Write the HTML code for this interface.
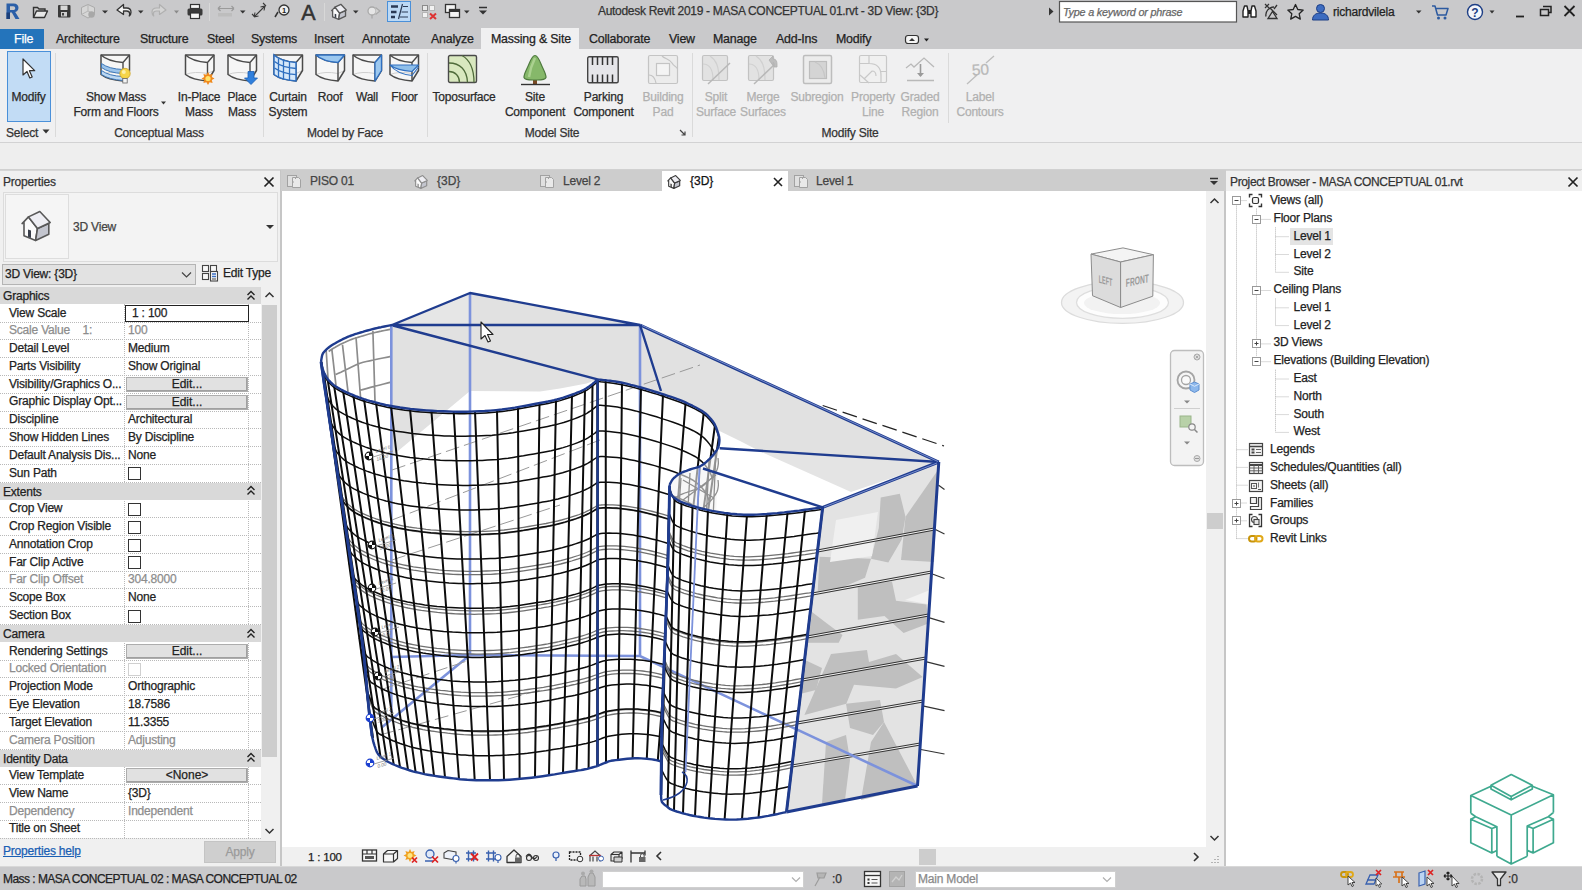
<!DOCTYPE html>
<html lang="en">
<head>
<meta charset="utf-8">
<title>Autodesk Revit 2019 - MASA CONCEPTUAL 01.rvt - 3D View: {3D}</title>
<style>
*{box-sizing:border-box;margin:0;padding:0}
html,body{width:1582px;height:890px;overflow:hidden;background:#c9c9cb}
body{font-family:"Liberation Sans",sans-serif;font-size:12px;color:#222;position:relative;-webkit-text-stroke:.25px currentColor}
div,span,svg{position:absolute}
.t{white-space:nowrap;line-height:14px;height:14px;font-size:12px;letter-spacing:-.2px}
.c{transform:translateX(-50%);text-align:center}
.dis{color:#a9a9a9}
.g{color:#8c8c8c}
#titlebar{left:0;top:0;width:1582px;height:28px;background:#c9c9cb}
#tabrow{left:0;top:28px;width:1582px;height:21px;background:#c9c9cb}
#ribbon{left:0;top:49px;width:1582px;height:94px;background:#f0f0f1;border-bottom:1px solid #d2d2d3}
#optbar{left:0;top:143px;width:1582px;height:27px;background:#eeeeee;border-bottom:1px solid #d0d0d0}
#props{left:0;top:170px;width:280px;height:696px;background:#f0f0f0}
#mid{left:280px;top:170px;width:946px;height:696px;background:#c6c6c6}
#viewtabs{left:281px;top:170px;width:945px;height:21px;background:#cdcdcd}
#canvas{left:282px;top:191px;width:924px;height:656px;background:#fff;overflow:hidden}
#vscroll{left:1206px;top:191px;width:18px;height:656px;background:#f0f0f0}
#viewctl{left:282px;top:847px;width:942px;height:19px;background:#f0f0f0}
#browser{left:1226px;top:170px;width:356px;height:696px;background:#fff}
#status{left:0;top:866px;width:1582px;height:24px;background:#c9c9cb}
.sep{width:1px;background:#dcdcdc;top:4px;height:84px}
.ptitle{top:77px;color:#333}
.rl{letter-spacing:-.2px;font-size:12px;line-height:15px;height:auto;white-space:nowrap;text-align:center;transform:translateX(-50%);top:41px;color:#2a2a2a}
.rl.dis{color:#b0b0b0}
.prow{left:0;width:261px;height:18px}
.pn{left:9px;top:2px}
.pv{left:128px;top:2px}
.phead{left:0;width:261px;background:#d9d9d9}
.cb{left:128px;width:13px;height:13px;border:1px solid #333;background:#fff}
.ebtn{left:126px;width:122px;height:15px;background:#e1e1e1;border:1px solid #adadad;box-shadow:inset -1px -1px 0 #a0a0a0;text-align:center;line-height:13px;font-size:12px}
.tr{white-space:nowrap;line-height:14px;height:14px;font-size:12px;color:#222;letter-spacing:-.2px}
</style>
</head>
<body>
<!-- ===== TITLE BAR ===== -->
<div id="titlebar">
<svg style="left:0;top:0" width="500" height="28" viewBox="0 0 500 28">
 <!-- Revit R logo -->
 <path d="M6.5 3.5h7.2c3 0 4.8 1.7 4.8 4.3 0 2.2-1.3 3.7-3.3 4.2l4.3 7h-4l-3.7-6.5h-1.8V19H6.5z M10 6.3v3.8h3.2c1.3 0 2-.8 2-1.9s-.7-1.9-2-1.9z" fill="#2b5fa8"/>
 <path d="M6.5 12.5l3.5 0V19H6.5z" fill="#1b3f7a"/>
 <!-- open folder -->
 <path d="M33.5 17.5v-10h4l1.5 1.5h6v2" fill="none" stroke="#333" stroke-width="1.4"/>
 <path d="M33.5 17.5l3-6.5h11l-3 6.5z" fill="#e8e8e8" stroke="#333" stroke-width="1.4" stroke-linejoin="round"/>
 <!-- save -->
 <rect x="58" y="5" width="12.500" height="12.500" rx="1" fill="#3a3a3a"/>
 <rect x="60.500" y="5.500" width="7" height="4.500" fill="#d8d8d8"/><rect x="61" y="12" width="6" height="4.500" fill="#cfcfcf"/><rect x="62" y="13" width="2" height="2.500" fill="#444"/>
 <!-- sync (disabled) -->
 <path d="M88 4.500l6.500 3v7l-6.500 3.500l-6.500-3.500v-7z" fill="#d6d6d6" stroke="#aaa" stroke-width="1"/>
 <path d="M88 4.500v6.500l6.500 3.500M88 11l-6.500 3.500" fill="none" stroke="#b5b5b5" stroke-width="1"/>
 <circle cx="91.500" cy="14.500" r="3.200" fill="#a8a8a8"/>
 <path d="M102 10.500h6l-3 3z" fill="#333"/>
 <!-- undo -->
 <path d="M117 10l6.500-5.500v3.500h3c3 0 4.500 2 4.500 4.200 0 1.600-.6 3-1.800 3.800.4-.8.5-1.500.5-2.200 0-1.700-1.200-2.800-3.200-2.800h-3v3.500z" fill="#f4f4f4" stroke="#333" stroke-width="1.300" stroke-linejoin="round"/>
 <path d="M138 10.500h5.500l-2.750 3z" fill="#333"/>
 <!-- redo (disabled) -->
 <path d="M166 10l-6.500-5.500v3.500h-3c-3 0-4.500 2-4.500 4.200 0 1.600.6 3 1.800 3.800-.4-.8-.5-1.500-.5-2.200 0-1.700 1.200-2.800 3.200-2.800h3v3.500z" fill="#d4d4d4" stroke="#b0b0b0" stroke-width="1.200" stroke-linejoin="round"/>
 <path d="M174 10.500h5l-2.500 3z" fill="#8a8a8a"/>
 <!-- print -->
 <rect x="190.500" y="4.500" width="9" height="4" fill="#f6f6f6" stroke="#333" stroke-width="1.200"/>
 <rect x="187.500" y="8.500" width="15" height="7" rx="1.500" fill="#3a3a3a"/>
 <rect x="190.500" y="13" width="9" height="5.500" fill="#f6f6f6" stroke="#333" stroke-width="1.200"/>
 <line x1="209.500" y1="3" x2="209.500" y2="21" stroke="#d8d8d8"/>
 <!-- measure (disabled look) -->
 <path d="M218 8.500h16M218 8.500l2.500-2.500M218 8.500l2.500 2.500M234 8.500l-2.500-2.500M234 8.500l-2.500 2.500" stroke="#9a9a9a" stroke-width="1.200" fill="none"/>
 <rect x="218" y="13" width="14" height="3.500" fill="#bdbdbd"/>
 <path d="M240 10.500h5.500l-2.750 3z" fill="#333"/>
 <!-- aligned dim -->
 <path d="M254 17l11-11M254 17l1-4.500M254 17l4.500-1M265 6l-4.500 1M265 6l-1 4.500M252 14l3 3M263 3l3 3" stroke="#3a3a3a" stroke-width="1.100" fill="none"/>
 <!-- tag -->
 <path d="M275 17l3-5" stroke="#333" stroke-width="1.500"/><circle cx="284" cy="10" r="5" fill="#efefef" stroke="#333" stroke-width="1.300"/>
 <text x="284" y="13" font-size="7.500" text-anchor="middle" fill="#222" font-family="Liberation Sans, sans-serif" font-weight="bold">1</text>
 <!-- text A -->
 <text x="308.500" y="19.500" font-size="21.500" text-anchor="middle" fill="#333" font-family="Liberation Sans, sans-serif" stroke="#333" stroke-width=".500">A</text>
 <!-- 3D view house -->
 <g transform="translate(329.500,2.500) scale(.52)"><path d="M4.100 15.600L10.500 8.900L19.500 20.400L17.600 32.400L6 27.700V14Z" fill="#fbfbfb" stroke="#585858" stroke-width="2.600" stroke-linejoin="round"/>
<path d="M19.500 20.400L30.800 15.600V26.300L17.600 32.400Z" fill="#c3c5ce" stroke="#585858" stroke-width="2.600" stroke-linejoin="round"/>
<path d="M10.500 8.900L21.800 3.500L32.200 14.500L19.500 20.400Z" fill="#eeeef3" stroke="#585858" stroke-width="2.600" stroke-linejoin="round"/>
<path d="M10 21.500l3 1V30l-3-1.200z" fill="#3a3f4a"/></g>
 <line x1="324.500" y1="3" x2="324.500" y2="21" stroke="#d8d8d8"/>
 <path d="M353 10.500h5.500l-2.750 3z" fill="#333"/>
 <!-- section (disabled) -->
 <circle cx="372" cy="11" r="4" fill="#e6e6e6" stroke="#a9a9a9" stroke-width="1.300"/><path d="M375.500 7.500l4.500 3.500-4.500 3.500" fill="#d0d0d0" stroke="#a9a9a9" stroke-width="1.200"/><path d="M372 15v3.500" stroke="#a9a9a9" stroke-width="1.300"/>
 <!-- thin lines (active) -->
 <rect x="387.500" y="1.500" width="23" height="20" fill="#bcd9f5" stroke="#4a90d9" stroke-width="1"/>
 <path d="M391 6.500h7M391 12h5.500M391 17h4" stroke="#2a3a55" stroke-width="2.400"/>
 <path d="M402.500 4l-4 15" stroke="#2a3a55" stroke-width="1.200"/><path d="M403 6.500h5M401.500 12h6.500M400 17h8" stroke="#2a3a55" stroke-width="1"/>
 <!-- close hidden -->
 <rect x="422.500" y="5.500" width="5" height="5" fill="#e8e8e8" stroke="#8a8a8a" stroke-width="1"/><rect x="429.500" y="5.500" width="5" height="5" fill="#f2f2f2" stroke="#b5b5b5" stroke-width="1"/><rect x="422.500" y="12.500" width="5" height="5" fill="#f2f2f2" stroke="#b5b5b5" stroke-width="1"/>
 <path d="M430 13.500l6 5.500M436 13.500l-6 5.500" stroke="#d33" stroke-width="2"/>
 <!-- switch windows -->
 <rect x="445.500" y="4.500" width="10" height="8" fill="#f4f4f4" stroke="#333" stroke-width="1.300"/><rect x="449.500" y="9.500" width="10" height="8" fill="#f4f4f4" stroke="#333" stroke-width="1.300"/><rect x="449.500" y="9.500" width="10" height="2.500" fill="#333"/>
 <path d="M464 10.500h5.500l-2.750 3z" fill="#333"/>
 <!-- customize -->
 <path d="M479 7.500h8" stroke="#333" stroke-width="1.500"/><path d="M479 10.500h8l-4 4z" fill="#333"/>
</svg>
<span class="t" style="left:598px;top:4px;font-size:12px;letter-spacing:-.3px;color:#333">Autodesk Revit 2019 - MASA CONCEPTUAL 01.rvt - 3D View: {3D}</span>
<svg style="left:1045px;top:0" width="537" height="28" viewBox="1045 0 537 28">
 <path d="M1049 7.500l4.500 4-4.500 4z" fill="#333"/>
 <rect x="1059.500" y="1.500" width="177" height="20.500" fill="#fff" stroke="#555" stroke-width="1.200"/>
 <!-- binoculars -->
 <path d="M1243 17v-6l1.500-5h2.500l1 5v6zM1251 17v-6l1-5h2.500l1.500 5v6z" fill="#fff" stroke="#222" stroke-width="1.400" stroke-linejoin="round"/><path d="M1248 10h3v4h-3z" fill="#222"/>
 <!-- satellite / comm center -->
 <path d="M1266 16.500c-1-5 3-9.500 8-9.500M1268 18.500h9l-4.500-7z" fill="none" stroke="#333" stroke-width="1.300"/><path d="M1270 8l7 7M1277 5l-3 4" stroke="#333" stroke-width="1.300"/><path d="M1265 4l4 4M1269 4l-4 4" stroke="#333" stroke-width="1.200"/>
 <!-- star -->
 <path d="M1295.500 4.500l2.300 5 5.400.6-4 3.700 1.100 5.300-4.800-2.700-4.800 2.700 1.100-5.300-4-3.700 5.400-.6z" fill="none" stroke="#222" stroke-width="1.300" stroke-linejoin="round"/>
 <!-- user -->
 <circle cx="1320.500" cy="8.500" r="4" fill="#3d6cc0" stroke="#1d3e85" stroke-width="1"/><path d="M1312.500 20c0-4.500 3-7 8-7s8 2.500 8 7z" fill="#3d6cc0" stroke="#1d3e85" stroke-width="1"/>
 <path d="M1416 10.500h5.500l-2.750 3z" fill="#333"/>
 <!-- cart -->
 <path d="M1432 6h3l2.500 9h8.500l2-6.500h-12" fill="none" stroke="#2c5aa0" stroke-width="1.500" stroke-linejoin="round"/><circle cx="1438.500" cy="18" r="1.500" fill="#2c5aa0"/><circle cx="1445" cy="18" r="1.500" fill="#2c5aa0"/>
 <!-- help -->
 <circle cx="1475" cy="12" r="7.500" fill="#f4f6fa" stroke="#1d3e85" stroke-width="1.400"/>
 <text x="1475" y="16.500" font-size="12" font-weight="bold" text-anchor="middle" fill="#1d3e85" font-family="Liberation Sans, sans-serif">?</text>
 <path d="M1489.500 10.500h5l-2.500 3z" fill="#333"/>
 <!-- window controls -->
 <path d="M1516 16.500h8" stroke="#222" stroke-width="1.800"/>
 <path d="M1543 6.500h8v6h-2.500" fill="none" stroke="#222" stroke-width="1.500"/><rect x="1540.500" y="9.500" width="8" height="6" fill="#c9c9cb" stroke="#222" stroke-width="1.500"/>
 <path d="M1564.500 6l10 10M1574.500 6l-10 10" stroke="#222" stroke-width="1.800"/>
</svg>
<span class="t" style="left:1063px;top:5px;font-style:italic;color:#666;font-size:10.800px">Type a keyword or phrase</span>
<span class="t" style="left:1333px;top:5px;color:#222">richardvilela</span>
</div>
<!-- ===== RIBBON TABS ===== -->
<div id="tabrow">
 <div style="left:0;top:1px;width:44px;height:20px;background:#2474bb"></div>
 <div style="left:481px;top:0;width:98px;height:22px;background:#f0f0f1"></div>
 <span class="t" style="left:14px;top:4px;color:#fff;font-size:12.500px">File</span>
 <span class="t" style="left:56px;top:4px;font-size:12.400px">Architecture</span>
 <span class="t" style="left:140px;top:4px;font-size:12.400px">Structure</span>
 <span class="t" style="left:207px;top:4px;font-size:12.400px">Steel</span>
 <span class="t" style="left:251px;top:4px;font-size:12.400px">Systems</span>
 <span class="t" style="left:314px;top:4px;font-size:12.400px">Insert</span>
 <span class="t" style="left:362px;top:4px;font-size:12.400px">Annotate</span>
 <span class="t" style="left:431px;top:4px;font-size:12.400px">Analyze</span>
 <span class="t" style="left:491px;top:4px;font-size:12.400px">Massing &amp; Site</span>
 <span class="t" style="left:589px;top:4px;font-size:12.400px">Collaborate</span>
 <span class="t" style="left:669px;top:4px;font-size:12.400px">View</span>
 <span class="t" style="left:713px;top:4px;font-size:12.400px">Manage</span>
 <span class="t" style="left:776px;top:4px;font-size:12.400px">Add-Ins</span>
 <span class="t" style="left:836px;top:4px;font-size:12.400px">Modify</span>
 <svg style="left:900px;top:0" width="40" height="21" viewBox="0 0 40 21"><rect x="5.500" y="7.500" width="13" height="8" rx="2.500" fill="#f4f4f4" stroke="#333" stroke-width="1.200"/><path d="M9 13l3-3 3 3z" fill="#333"/><path d="M24 10.500h5l-2.500 3z" fill="#222"/></svg>
</div>
<!-- ===== RIBBON ===== -->
<div id="ribbon">
<svg style="left:0;top:0" width="1020" height="92" viewBox="0 0 1020 92">
 <defs>
  <g id="mass">
   <path d="M1 1H29.500V16.500L23 27Q8 26 1 20.500Z" fill="#f6f6f6" stroke="none"/>
   <path d="M1 20.500Q10 17 23 19.500L29.500 16.500M23 19.500V27" fill="none" stroke="#cfcfcf" stroke-width="1"/>
   <path d="M1 1H29.500V16.500L23 27Q8 26 1 20.500Z" fill="none" stroke="#4a4a4a" stroke-width="1.500" stroke-linejoin="round"/>
   <path d="M1 1Q8 7.500 23 8.500L29.500 1M23 8.500V27" fill="none" stroke="#4a4a4a" stroke-width="1.400"/>
  </g>
 </defs>
 <!-- Modify button -->
 <rect x="7.500" y="2.500" width="43" height="70" fill="#c2dcf5" stroke="#4a90d9" stroke-width="1"/>
 <path d="M23 10v16l4-3.500 2.800 6.500 2.400-1-2.800-6.300h5.300z" fill="#fff" stroke="#333" stroke-width="1.200" stroke-linejoin="round"/>
 <path d="M42.500 80.500h7l-3.500 4z" fill="#333"/>
 <!-- separators -->
 <path d="M55.500 4v84M263.500 4v84M427.500 4v84M692.500 4v84M948.500 4v70" stroke="#dadada" stroke-width="1"/>
 <!-- Show Mass -->
 <g transform="translate(100,5)">
  <use href="#mass"/>
  <path d="M1.500 9.500Q9 15 23 15.500V19.500Q9 19 1.500 13.500Z" fill="#9cc4ea" stroke="#3d77b8" stroke-width="1"/>
  <path d="M1.500 16.500Q9 22 23 22.500V26.500Q9 25.500 1.500 20.500Z" fill="#bcd8f2" stroke="#3d77b8" stroke-width="1"/>
  <circle cx="25" cy="19.500" r="5.200" fill="#f6d548" stroke="#c9a227" stroke-width=".8"/>
  <circle cx="23.800" cy="18" r="2" fill="#fdf0a8"/>
  <rect x="22.800" y="24.500" width="4.400" height="4.500" fill="#f4f4f4" stroke="#666" stroke-width=".8"/>
 </g>
 <path d="M161 52.500h5l-2.500 3z" fill="#333"/>
 <!-- In-Place Mass -->
 <g transform="translate(184.500,5)"><use href="#mass"/>
  <g transform="translate(23.500,24.500)"><path d="M0-6.500L1.600-3.800 4.600-4.600 3.800-1.600 6.500 0 3.800 1.600 4.600 4.600 1.600 3.800 0 6.500-1.600 3.800-4.600 4.600-3.800 1.600-6.500 0-3.800-1.600-4.600-4.600-1.600-3.800Z" fill="#f08a1d"/><circle r="2.600" fill="#ffe26a"/></g>
 </g>
 <!-- Place Mass -->
 <g transform="translate(227,5)"><use href="#mass"/>
  <path d="M21 17.500h6v6.500h3.500l-6.500 6.500-6.500-6.500h3.500z" fill="#2f7fdc" stroke="#1b5fb5" stroke-width=".8"/>
 </g>
 <!-- Curtain System -->
 <g transform="translate(273,5)"><use href="#mass"/>
  <path d="M1 1Q8 7.500 23 8.500V27Q8 26 1 20.500Z" fill="#d6e8fa" stroke="#2f6fc0" stroke-width="1.500"/>
  <path d="M1.500 7.500Q9 13.500 23 14.500M1.500 14Q9 19.500 23 20.700M5.500 4.500V23.500M10.500 6.500V25.300M16.500 8V26.500" fill="none" stroke="#2f6fc0" stroke-width="1.300"/>
 </g>
 <!-- Roof -->
 <g transform="translate(315,5)"><use href="#mass"/>
  <path d="M1 1H29.500L23 8.500Q8 7.500 1 1Z" fill="#9cc8ef" stroke="#2f6fc0" stroke-width="1.300" stroke-linejoin="round"/>
 </g>
 <!-- Wall -->
 <g transform="translate(352,5)"><use href="#mass"/>
  <path d="M23 8.500L29.500 1V16.500L23 27Z" fill="#9cc8ef" stroke="#2f6fc0" stroke-width="1.300" stroke-linejoin="round"/>
 </g>
 <!-- Floor -->
 <g transform="translate(389,5)"><use href="#mass"/>
  <path d="M1 11H29.500L23 17.500Q8 16.500 1 11Z" fill="#8fbfea" stroke="#2f6fc0" stroke-width="1.200" stroke-linejoin="round"/>
  <path d="M1 11Q8 20 23 21.500L29.500 13" fill="none" stroke="#2f6fc0" stroke-width="1.100"/>
 </g>
 <!-- Toposurface -->
 <g transform="translate(448,6)">
  <rect x=".500" y=".500" width="28" height="27" rx="1.500" fill="#d9e8bf" stroke="#4a4a4a" stroke-width="1.400"/>
  <path d="M14 .500C22 5 26 14 26 27.500M1 8C12 8 19 15 19.500 27.500M1 16.500C7 16.500 11.500 21 11.500 27.500" fill="none" stroke="#4f6b3a" stroke-width="1.300"/>
 </g>
 <!-- Site component tree -->
 <g transform="translate(520,5)">
  <rect x="13" y="24" width="4" height="6" fill="#7a4a24"/>
  <path d="M15 1.500C17.500 1.500 19 5 21 10C23 15 26.500 20.500 26 23.500C25 26.500 19 26 15 26C11 26 5 26.500 4 23.500C3.500 20.500 7 15 9 10C11 5 12.500 1.500 15 1.500Z" fill="#86b86a" stroke="#4f7a3f" stroke-width="1.200"/>
  <path d="M15 4C12 10 10 16 9 23" stroke="#b4d79a" stroke-width="2.500" fill="none" opacity=".8"/>
  <path d="M1 30.500h29" stroke="#333" stroke-width="1.400"/>
 </g>
 <!-- Parking -->
 <g transform="translate(587,7)">
  <rect x=".700" y=".700" width="30.500" height="26" rx="1.500" fill="#e6e6ea" stroke="#444" stroke-width="1.400"/>
  <path d="M5.500 1v8M10.500 1v8M15.500 1v8M20.500 1v8M25.500 1v8M5.500 18.500v8M10.500 18.500v8M15.500 18.500v8M20.500 18.500v8M25.500 18.500v8" stroke="#333" stroke-width="1.500"/>
 </g>
 <!-- Building Pad (disabled) -->
 <g transform="translate(648,6)" stroke="#c4c4c4" fill="none" stroke-width="1.200">
  <rect x=".500" y=".500" width="29" height="28" rx="1.500" fill="#ececec"/>
  <rect x="8.500" y="8.500" width="13" height="12" fill="#f4f4f4"/>
  <path d="M14 1c3 3 8 3 10 7s5 3 5.500 6M1 20c4 0 6 3 7 8"/>
 </g>
 <!-- Split Surface -->
 <g transform="translate(702,6)" stroke="#c2c2c2" fill="none" stroke-width="1.200">
  <rect x=".500" y=".500" width="25" height="25" rx="1.500" fill="#e2e2e2"/>
  <path d="M8 1c6 4 9 10 9 24M1 9c6 0 10 5 10 16" stroke="#d0d0d0"/>
  <path d="M6 29L28 8" stroke="#b8b8b8" stroke-width="1.500"/>
 </g>
 <!-- Merge Surfaces -->
 <g transform="translate(748,6)" stroke="#c2c2c2" fill="none" stroke-width="1.200">
  <rect x=".500" y=".500" width="25" height="25" rx="1.500" fill="#e2e2e2"/>
  <path d="M8 1c6 4 9 10 9 24M1 9c6 0 10 5 10 16" stroke="#d0d0d0"/>
  <path d="M6 29L26 10" stroke="#b8b8b8" stroke-width="1.500"/>
  <path d="M21 5l4-4v3c3 0 4 2 4 5v3h-3v-3c0-1-.5-1.500-1-1.500v3z" fill="#bdbdbd" stroke="#b0b0b0" stroke-width=".8"/>
 </g>
 <!-- Subregion -->
 <g transform="translate(803,6)" stroke="#bdbdbd" fill="none" stroke-width="1.200">
  <rect x=".500" y=".500" width="28" height="28" rx="1.500" fill="#ececec" stroke-width="1.500"/>
  <rect x="6.500" y="6.500" width="17" height="17" fill="#d4d4d4"/>
  <path d="M12 7c5 2 9 7 10 16" stroke="#c6c6c6"/>
 </g>
 <!-- Property Line -->
 <g transform="translate(859,6)" stroke="#c8c8c8" fill="none" stroke-width="1.200">
  <rect x=".500" y=".500" width="27" height="27" rx="1.500" fill="#f0f0f0"/>
  <path d="M10 .500v8c8 0 12 4 12 12v7.500M1 8.500h9M22 16.500h6M1 20l9 8M5 24l8-8c3 0 4 2 4 5"/>
 </g>
 <!-- Graded Region -->
 <g transform="translate(905,6)" stroke="#b9b9b9" fill="none" stroke-width="1.300">
  <path d="M1 13l5-4 3 3 10-9 10 9M2 25.500h27"/>
  <path d="M15.500 9v12" stroke="#9a9a9a" stroke-width="1.600"/><path d="M12 18l3.500 4 3.500-4z" fill="#9a9a9a" stroke="none"/>
 </g>
 <!-- Label contours -->
 <g transform="translate(966,6)">
  <path d="M1 29l10-9M20 8l8-7" stroke="#bdbdbd" stroke-width="1.300"/>
 </g>
</svg>
<span class="t" style="left:972px;top:12px;font-size:15.500px;line-height:18px;height:18px;color:#b9b9b9;transform:rotate(-4deg)">50</span>
<!-- labels -->
<span class="rl" style="left:28.500px;top:41px">Modify</span>
<span class="t" style="left:6px;top:77px;color:#333">Select</span>
<span class="rl" style="left:116px">Show Mass<br>Form and Floors</span>
<span class="rl" style="left:199px">In-Place<br>Mass</span>
<span class="rl" style="left:242px">Place<br>Mass</span>
<span class="rl" style="left:288px">Curtain<br>System</span>
<span class="rl" style="left:330px">Roof</span>
<span class="rl" style="left:367px">Wall</span>
<span class="rl" style="left:404.500px">Floor</span>
<span class="rl" style="left:464px">Toposurface</span>
<span class="rl" style="left:535px">Site<br>Component</span>
<span class="rl" style="left:603.500px">Parking<br>Component</span>
<span class="rl dis" style="left:663px">Building<br>Pad</span>
<span class="rl dis" style="left:716px">Split<br>Surface</span>
<span class="rl dis" style="left:763px">Merge<br>Surfaces</span>
<span class="rl dis" style="left:817px">Subregion</span>
<span class="rl dis" style="left:873px">Property<br>Line</span>
<span class="rl dis" style="left:920px">Graded<br>Region</span>
<span class="rl dis" style="left:980px">Label<br>Contours</span>
<span class="t c ptitle" style="left:159px">Conceptual Mass</span>
<span class="t c ptitle" style="left:345px">Model by Face</span>
<span class="t c ptitle" style="left:552px">Model Site</span>
<span class="t c ptitle" style="left:850px">Modify Site</span>
<svg style="left:678px;top:79px" width="10" height="10" viewBox="0 0 10 10"><path d="M2 2l5 5M7 3.500V7H3.500" fill="none" stroke="#444" stroke-width="1.200"/></svg>
</div>
<div id="optbar"></div>
<!-- ===== PROPERTIES ===== -->
<div id="props">
<div style="left:0;top:0;width:280px;height:1px;background:#d6d6d6"></div>
<span class="t" style="left:3px;top:5px;color:#333">Properties</span>
<svg style="left:263px;top:6px" width="12" height="12" viewBox="0 0 12 12"><path d="M1.500 1.500l9 9M10.500 1.500l-9 9" stroke="#222" stroke-width="1.700"/></svg>
<div style="left:3px;top:22px;width:275px;height:70px;background:#f3f3f3;border:1px solid #dcdcdc"></div>
<div style="left:5px;top:24px;width:64px;height:65px;background:#f5f5f5;border:1px solid #dddddd"></div>
<svg style="left:18px;top:38px" width="36" height="36" viewBox="0 0 36 36">
<path d="M4.100 15.600L10.500 8.900L19.500 20.400L17.600 32.400L6 27.700V14Z" fill="#fbfbfb" stroke="#585858" stroke-width="1.600" stroke-linejoin="round"/>
<path d="M19.500 20.400L30.800 15.600V26.300L17.600 32.400Z" fill="#c3c5ce" stroke="#585858" stroke-width="1.600" stroke-linejoin="round"/>
<path d="M10.500 8.900L21.800 3.500L32.200 14.500L19.500 20.400Z" fill="#eeeef3" stroke="#585858" stroke-width="1.600" stroke-linejoin="round"/>
<path d="M10 21.500l3 1V30l-3-1.200z" fill="#3a3f4a"/>
</svg>
<span class="t" style="left:73px;top:50px;color:#444">3D View</span>
<svg style="left:265px;top:54px" width="10" height="6" viewBox="0 0 10 6"><path d="M1 1h8L5 5z" fill="#333"/></svg>
<div style="left:2px;top:94px;width:194px;height:21px;background:#e2e2e2;border:1px solid #b4b4b4"></div>
<span class="t" style="left:5px;top:97px">3D View: {3D}</span>
<svg style="left:181px;top:101px" width="11" height="8" viewBox="0 0 11 8"><path d="M1 1.500l4.500 4.500L10 1.500" fill="none" stroke="#444" stroke-width="1.200"/></svg>
<svg style="left:201px;top:94px" width="20" height="20" viewBox="0 0 20 20">
<rect x="1.500" y="1.500" width="6" height="6" fill="#f8f8f8" stroke="#444" stroke-width="1.100"/><rect x="9.500" y="1.500" width="6" height="6" fill="#f8f8f8" stroke="#444" stroke-width="1.100"/>
<rect x="1.500" y="9.500" width="6" height="6" fill="#f8f8f8" stroke="#444" stroke-width="1.100"/>
<rect x="9.500" y="7.500" width="7" height="9.500" fill="#f8f8f8" stroke="#444" stroke-width="1.100"/><path d="M11 10h4M11 12.500h4" stroke="#3b6fc4" stroke-width="1.300"/><path d="M11 15h4" stroke="#444" stroke-width="1"/></svg>
<span class="t" style="left:223px;top:96px">Edit Type</span>
<div style="left:0;top:134.3px;width:261px;height:533.7px;background:#fff"></div>
<div style="left:124px;top:134.3px;width:0;height:533.7px;border-left:1px dotted #b9b9b9"></div>
<div style="left:248px;top:134.3px;width:0;height:533.7px;border-left:1px dotted #b9b9b9"></div>
<div class="phead" style="top:117.0px;height:17.3px"></div>
<span class="t" style="left:3px;top:119.2px">Graphics</span>
<svg style="left:246px;top:119.7px" width="10" height="11" viewBox="0 0 10 11"><path d="M1.500 5l3.500-3.500L8.500 5M1.500 9.500l3.500-3.500 3.500 3.500" fill="none" stroke="#222" stroke-width="1.400"/></svg>
<div style="left:0;top:151.6px;width:261px;height:0;border-top:1px dotted #b9b9b9"></div>
<span class="t" style="left:9px;top:135.5px">View Scale</span>
<div style="left:125px;top:134.8px;width:124px;height:16.8px;border:1.500px solid #222;background:#fff"></div>
<span class="t" style="left:132px;top:135.5px">1 : 100</span>
<div style="left:0;top:169.4px;width:261px;height:0;border-top:1px dotted #b9b9b9"></div>
<span class="t" style="left:9px;top:153.3px;color:#8d8d8d">Scale Value&nbsp;&nbsp;&nbsp; 1:</span>
<span class="t" style="left:128px;top:153.3px;color:#8d8d8d">100</span>
<div style="left:0;top:187.2px;width:261px;height:0;border-top:1px dotted #b9b9b9"></div>
<span class="t" style="left:9px;top:171.1px">Detail Level</span>
<span class="t" style="left:128px;top:171.1px">Medium</span>
<div style="left:0;top:205.0px;width:261px;height:0;border-top:1px dotted #b9b9b9"></div>
<span class="t" style="left:9px;top:188.9px">Parts Visibility</span>
<span class="t" style="left:128px;top:188.9px">Show Original</span>
<div style="left:0;top:222.8px;width:261px;height:0;border-top:1px dotted #b9b9b9"></div>
<span class="t" style="left:9px;top:206.7px">Visibility/Graphics O...</span>
<div class="ebtn" style="top:207.0px">Edit...</div>
<div style="left:0;top:240.5px;width:261px;height:0;border-top:1px dotted #b9b9b9"></div>
<span class="t" style="left:9px;top:224.4px">Graphic Display Opt...</span>
<div class="ebtn" style="top:224.8px">Edit...</div>
<div style="left:0;top:258.3px;width:261px;height:0;border-top:1px dotted #b9b9b9"></div>
<span class="t" style="left:9px;top:242.2px">Discipline</span>
<span class="t" style="left:128px;top:242.2px">Architectural</span>
<div style="left:0;top:276.1px;width:261px;height:0;border-top:1px dotted #b9b9b9"></div>
<span class="t" style="left:9px;top:260.0px">Show Hidden Lines</span>
<span class="t" style="left:128px;top:260.0px">By Discipline</span>
<div style="left:0;top:293.9px;width:261px;height:0;border-top:1px dotted #b9b9b9"></div>
<span class="t" style="left:9px;top:277.8px">Default Analysis Dis...</span>
<span class="t" style="left:128px;top:277.8px">None</span>
<div style="left:0;top:311.7px;width:261px;height:0;border-top:1px dotted #b9b9b9"></div>
<span class="t" style="left:9px;top:295.6px">Sun Path</span>
<div class="cb" style="top:297.3px"></div>
<div class="phead" style="top:312.7px;height:17.3px"></div>
<span class="t" style="left:3px;top:314.9px">Extents</span>
<svg style="left:246px;top:315.4px" width="10" height="11" viewBox="0 0 10 11"><path d="M1.500 5l3.500-3.500L8.500 5M1.500 9.500l3.500-3.500 3.500 3.500" fill="none" stroke="#222" stroke-width="1.400"/></svg>
<div style="left:0;top:347.3px;width:261px;height:0;border-top:1px dotted #b9b9b9"></div>
<span class="t" style="left:9px;top:331.2px">Crop View</span>
<div class="cb" style="top:332.9px"></div>
<div style="left:0;top:365.1px;width:261px;height:0;border-top:1px dotted #b9b9b9"></div>
<span class="t" style="left:9px;top:349.0px">Crop Region Visible</span>
<div class="cb" style="top:350.7px"></div>
<div style="left:0;top:382.9px;width:261px;height:0;border-top:1px dotted #b9b9b9"></div>
<span class="t" style="left:9px;top:366.8px">Annotation Crop</span>
<div class="cb" style="top:368.5px"></div>
<div style="left:0;top:400.7px;width:261px;height:0;border-top:1px dotted #b9b9b9"></div>
<span class="t" style="left:9px;top:384.6px">Far Clip Active</span>
<div class="cb" style="top:386.3px"></div>
<div style="left:0;top:418.4px;width:261px;height:0;border-top:1px dotted #b9b9b9"></div>
<span class="t" style="left:9px;top:402.3px;color:#8d8d8d">Far Clip Offset</span>
<span class="t" style="left:128px;top:402.3px;color:#8d8d8d">304.8000</span>
<div style="left:0;top:436.2px;width:261px;height:0;border-top:1px dotted #b9b9b9"></div>
<span class="t" style="left:9px;top:420.1px">Scope Box</span>
<span class="t" style="left:128px;top:420.1px">None</span>
<div style="left:0;top:454.0px;width:261px;height:0;border-top:1px dotted #b9b9b9"></div>
<span class="t" style="left:9px;top:437.9px">Section Box</span>
<div class="cb" style="top:439.6px"></div>
<div class="phead" style="top:455.0px;height:17.3px"></div>
<span class="t" style="left:3px;top:457.2px">Camera</span>
<svg style="left:246px;top:457.7px" width="10" height="11" viewBox="0 0 10 11"><path d="M1.500 5l3.500-3.500L8.500 5M1.500 9.500l3.500-3.500 3.500 3.500" fill="none" stroke="#222" stroke-width="1.400"/></svg>
<div style="left:0;top:489.6px;width:261px;height:0;border-top:1px dotted #b9b9b9"></div>
<span class="t" style="left:9px;top:473.5px">Rendering Settings</span>
<div class="ebtn" style="top:473.8px">Edit...</div>
<div style="left:0;top:507.4px;width:261px;height:0;border-top:1px dotted #b9b9b9"></div>
<span class="t" style="left:9px;top:491.3px;color:#8d8d8d">Locked Orientation</span>
<div class="cb" style="top:493.0px;border-color:#d0d0d0"></div>
<div style="left:0;top:525.2px;width:261px;height:0;border-top:1px dotted #b9b9b9"></div>
<span class="t" style="left:9px;top:509.1px">Projection Mode</span>
<span class="t" style="left:128px;top:509.1px">Orthographic</span>
<div style="left:0;top:543.0px;width:261px;height:0;border-top:1px dotted #b9b9b9"></div>
<span class="t" style="left:9px;top:526.9px">Eye Elevation</span>
<span class="t" style="left:128px;top:526.9px">18.7586</span>
<div style="left:0;top:560.8px;width:261px;height:0;border-top:1px dotted #b9b9b9"></div>
<span class="t" style="left:9px;top:544.7px">Target Elevation</span>
<span class="t" style="left:128px;top:544.7px">11.3355</span>
<div style="left:0;top:578.6px;width:261px;height:0;border-top:1px dotted #b9b9b9"></div>
<span class="t" style="left:9px;top:562.5px;color:#8d8d8d">Camera Position</span>
<span class="t" style="left:128px;top:562.5px;color:#8d8d8d">Adjusting</span>
<div class="phead" style="top:579.6px;height:17.3px"></div>
<span class="t" style="left:3px;top:581.8px">Identity Data</span>
<svg style="left:246px;top:582.2px" width="10" height="11" viewBox="0 0 10 11"><path d="M1.500 5l3.500-3.500L8.500 5M1.500 9.500l3.500-3.500 3.500 3.500" fill="none" stroke="#222" stroke-width="1.400"/></svg>
<div style="left:0;top:614.1px;width:261px;height:0;border-top:1px dotted #b9b9b9"></div>
<span class="t" style="left:9px;top:598.0px">View Template</span>
<div class="ebtn" style="top:598.3px">&lt;None&gt;</div>
<div style="left:0;top:631.9px;width:261px;height:0;border-top:1px dotted #b9b9b9"></div>
<span class="t" style="left:9px;top:615.8px">View Name</span>
<span class="t" style="left:128px;top:615.8px">{3D}</span>
<div style="left:0;top:649.7px;width:261px;height:0;border-top:1px dotted #b9b9b9"></div>
<span class="t" style="left:9px;top:633.6px;color:#8d8d8d">Dependency</span>
<span class="t" style="left:128px;top:633.6px;color:#8d8d8d">Independent</span>
<div style="left:0;top:667.5px;width:261px;height:0;border-top:1px dotted #b9b9b9"></div>
<span class="t" style="left:9px;top:651.4px">Title on Sheet</span>
<span class="t" style="left:128px;top:651.4px"></span>
<div style="left:262px;top:117px;width:16px;height:553px;background:#f0f0f0"></div>
<div style="left:262px;top:135px;width:15px;height:452px;background:#cdcdcd"></div>
<svg style="left:264px;top:121px" width="11" height="8" viewBox="0 0 11 8"><path d="M1.500 6l4-4 4 4" fill="none" stroke="#333" stroke-width="1.500"/></svg>
<svg style="left:264px;top:657px" width="11" height="8" viewBox="0 0 11 8"><path d="M1.500 2l4 4 4-4" fill="none" stroke="#333" stroke-width="1.500"/></svg>
<span class="t" style="left:3px;top:674px;color:#1a5fb4;text-decoration:underline">Properties help</span>
<div style="left:204px;top:671px;width:72px;height:22px;background:#cfcfcf;border:1px solid #c4c4c4"></div>
<span class="t c" style="left:240px;top:675px;color:#9a9a9a">Apply</span>
</div>
<!-- ===== VIEW TABS ===== -->
<div id="mid"></div>
<div id="viewtabs">
<div style="left:381px;top:1px;width:126px;height:21px;background:#fff"></div>
<svg style="left:5px;top:4px" width="17" height="15" viewBox="0 0 17 15"><rect x="1.500" y="1.500" width="9" height="11" fill="#e0e0e0" stroke="#a2a2a2" stroke-width="1"/><path d="M6.500 3.500h6l2 2v8h-8z" fill="#e9e9e9" stroke="#a2a2a2" stroke-width="1"/><path d="M9.500 3.500v2.500M6.500 8h2" stroke="#a2a2a2" stroke-width="1" stroke-dasharray="1.500 1"/></svg>
<span class="t" style="left:29px;top:4px;color:#444">PISO 01</span>
<svg style="left:132px;top:3.500px" width="16" height="16" viewBox="0 0 36 36"><path d="M4.100 15.600L10.500 8.900L19.500 20.400L17.600 32.400L6 27.700V14Z" fill="#fbfbfb" stroke="#8e8e8e" stroke-width="2.600" stroke-linejoin="round"/><path d="M19.500 20.400L30.800 15.600V26.300L17.600 32.400Z" fill="#c3c5ce" stroke="#8e8e8e" stroke-width="2.600" stroke-linejoin="round"/><path d="M10.500 8.900L21.800 3.500L32.200 14.500L19.500 20.400Z" fill="#eeeef3" stroke="#8e8e8e" stroke-width="2.600" stroke-linejoin="round"/><path d="M10 21.500l3 1V30l-3-1.200z" fill="#8e8e8e"/></svg>
<span class="t" style="left:156px;top:3.500px;color:#444;letter-spacing:0">{3D}</span>
<svg style="left:258px;top:4px" width="17" height="15" viewBox="0 0 17 15"><rect x="1.500" y="1.500" width="9" height="11" fill="#e0e0e0" stroke="#a2a2a2" stroke-width="1"/><path d="M6.500 3.500h6l2 2v8h-8z" fill="#e9e9e9" stroke="#a2a2a2" stroke-width="1"/><path d="M9.500 3.500v2.500M6.500 8h2" stroke="#a2a2a2" stroke-width="1" stroke-dasharray="1.500 1"/></svg>
<span class="t" style="left:282px;top:4px;color:#444">Level 2</span>
<svg style="left:385px;top:3.500px" width="16" height="16" viewBox="0 0 36 36"><path d="M4.100 15.600L10.500 8.900L19.500 20.400L17.600 32.400L6 27.700V14Z" fill="#fbfbfb" stroke="#3c3c3c" stroke-width="2.600" stroke-linejoin="round"/><path d="M19.500 20.400L30.800 15.600V26.300L17.600 32.400Z" fill="#c3c5ce" stroke="#3c3c3c" stroke-width="2.600" stroke-linejoin="round"/><path d="M10.500 8.900L21.800 3.500L32.200 14.500L19.500 20.400Z" fill="#eeeef3" stroke="#3c3c3c" stroke-width="2.600" stroke-linejoin="round"/><path d="M10 21.500l3 1V30l-3-1.200z" fill="#3c3c3c"/></svg>
<span class="t" style="left:409px;top:3.500px;color:#111;letter-spacing:0">{3D}</span>
<svg style="left:491px;top:6px" width="12" height="12" viewBox="0 0 12 12"><path d="M2 2l8 8M10 2l-8 8" stroke="#222" stroke-width="1.600"/></svg>
<svg style="left:512px;top:4px" width="17" height="15" viewBox="0 0 17 15"><rect x="1.500" y="1.500" width="9" height="11" fill="#e0e0e0" stroke="#a2a2a2" stroke-width="1"/><path d="M6.500 3.500h6l2 2v8h-8z" fill="#e9e9e9" stroke="#a2a2a2" stroke-width="1"/><path d="M9.500 3.500v2.500M6.500 8h2" stroke="#a2a2a2" stroke-width="1" stroke-dasharray="1.500 1"/></svg>
<span class="t" style="left:535px;top:4px;color:#444">Level 1</span>
<svg style="left:928px;top:7px" width="10" height="9" viewBox="0 0 10 9"><path d="M1 1.500h8" stroke="#333" stroke-width="1.500"/><path d="M1 4h8L5 8z" fill="#333"/></svg>
</div>
<div id="canvas">
<svg style="left:0;top:0" width="924" height="656" viewBox="282 191 924 656" font-family="Liberation Sans, sans-serif">
<path d="M392.0 325.0 L470.0 293.0 L640.0 325.0 L938.8 462.0 L759.0 450.8 L740.0 441.0 L719.5 431.0 L719.0 436.0 L718.6 434.8 L718.0 433.0 L717.3 430.9 L716.6 428.8 L715.8 426.7 L715.0 425.0 L714.3 423.6 L713.5 422.4 L712.8 421.3 L711.9 420.2 L711.0 419.1 L710.0 418.0 L708.9 416.8 L707.9 415.7 L706.8 414.6 L705.5 413.4 L703.8 412.2 L701.7 410.8 L699.0 409.2 L695.9 407.5 L692.4 405.7 L688.7 404.0 L685.0 402.2 L681.5 400.7 L678.1 399.3 L674.7 398.1 L671.2 396.9 L667.8 395.8 L664.4 394.7 L661.0 393.6 L657.6 392.5 L654.3 391.5 L651.0 390.4 L647.6 389.4 L644.3 388.4 L641.0 387.5 L637.6 386.6 L634.2 385.6 L630.7 384.8 L627.3 383.9 L624.1 383.2 L621.0 382.5 L618.1 382.0 L615.3 381.5 L612.6 381.1 L610.1 380.8 L607.8 380.6 L605.7 380.3 L603.8 380.1 L602.2 379.9 L600.7 379.7 L599.4 379.6 L598.4 379.5 L597.6 379.4 L586.5 383.5 L560.0 388.5 L540.0 391.6 L470.0 391.0 L392.0 456.0Z" fill="#e1e1e1"/>
<path d="M759 450.800L938.800 462L851 492Z" fill="#e4e4e4"/>
<path d="M392 325L470 293L470 325Z" fill="#e6e6e6"/>
<path d="M822.7 507.3 L938.8 462.0 L917.5 786.0 L786.5 812.0Z" fill="#e3e3e3"/>
<path d="M880.7 497.6 L899.8 493.8 L905.5 516.7 L901.7 539.6 L888.3 562.5 L871.0 558.7 L878.8 528.0Z" fill="#bfbfbf"/>
<path d="M905.5 516.7 L938.0 470.0 L934.0 562.0 L901.0 560.0Z" fill="#bfbfbf"/>
<path d="M819.6 556.8 L871.0 558.7 L865.0 577.8 L838.7 589.0 L817.7 591.0Z" fill="#bfbfbf"/>
<path d="M857.8 585.4 L892.0 581.6 L896.0 600.7 L926.5 604.5 L928.4 623.6 L903.6 633.0 L884.5 616.0 L857.8 619.8Z" fill="#bfbfbf"/>
<path d="M812.0 612.0 L827.0 623.6 L842.5 635.0 L838.7 642.7 L808.0 642.7Z" fill="#bfbfbf"/>
<path d="M831.0 654.0 L867.0 650.0 L869.0 662.0 L896.0 654.0 L922.7 677.0 L896.0 688.5 L854.0 684.7 L846.3 703.8 L804.4 715.0Z" fill="#bfbfbf"/>
<path d="M846.0 703.8 L880.0 700.0 L884.0 722.0 L873.0 735.0 L850.0 728.0Z" fill="#bfbfbf"/>
<path d="M826.0 742.0 L846.0 735.0 L850.0 760.0 L845.0 800.0 L822.0 804.0Z" fill="#bfbfbf"/>
<path d="M861.0 800.0 L871.0 742.0 L884.0 722.0 L896.0 745.0 L917.5 786.0Z" fill="#bfbfbf"/>
<path d="M805.0 660.0 L822.0 668.0 L816.0 690.0 L800.0 694.0Z" fill="#bfbfbf"/>
<path d="M836 520L878 512L872 556L830 562Z" fill="#f0f0f0"/>
<path d="M905 600L930 590L928 604Z" fill="#f2f2f2"/>
<path d="M817.5 551.0L934.4 529.0" stroke="#333" stroke-width="3"/>
<path d="M817.5 551.0L934.4 529.0" stroke="#f4f4f4" stroke-width="1.100"/>
<path d="M812.4 594.0L931.6 572.0" stroke="#333" stroke-width="3"/>
<path d="M812.4 594.0L931.6 572.0" stroke="#f4f4f4" stroke-width="1.100"/>
<path d="M807.3 637.0L928.7 615.0" stroke="#333" stroke-width="3"/>
<path d="M807.3 637.0L928.7 615.0" stroke="#f4f4f4" stroke-width="1.100"/>
<path d="M802.2 680.0L925.9 658.0" stroke="#333" stroke-width="3"/>
<path d="M802.2 680.0L925.9 658.0" stroke="#f4f4f4" stroke-width="1.100"/>
<path d="M797.1 723.0L923.1 701.0" stroke="#333" stroke-width="3"/>
<path d="M797.1 723.0L923.1 701.0" stroke="#f4f4f4" stroke-width="1.100"/>
<path d="M792.0 766.0L920.3 744.0" stroke="#333" stroke-width="3"/>
<path d="M792.0 766.0L920.3 744.0" stroke="#f4f4f4" stroke-width="1.100"/>
<path d="M938.3 485.0L944.500 489.5" stroke="#333" stroke-width="1.200"/>
<path d="M935.4 529.5L944.500 534.0" stroke="#333" stroke-width="1.200"/>
<path d="M932.4 574.0L944.500 578.5" stroke="#333" stroke-width="1.200"/>
<path d="M929.6 617.9L944.500 622.4" stroke="#333" stroke-width="1.200"/>
<path d="M926.7 661.8L944.500 666.3" stroke="#333" stroke-width="1.200"/>
<path d="M923.8 706.1L944.500 710.6" stroke="#333" stroke-width="1.200"/>
<path d="M920.9 749.5L944.500 754.0" stroke="#333" stroke-width="1.200"/>
<path d="M321.0 362.0 L321.1 361.3 L321.2 360.4 L321.4 359.2 L321.6 358.1 L321.8 357.0 L322.0 356.0 L322.2 355.2 L322.4 354.6 L322.7 354.0 L323.0 353.4 L323.4 352.7 L324.0 352.0 L324.7 351.2 L325.6 350.3 L326.5 349.4 L327.6 348.4 L328.7 347.5 L330.0 346.5 L331.4 345.5 L333.0 344.5 L334.8 343.5 L336.5 342.5 L338.3 341.5 L340.0 340.6 L341.7 339.7 L343.3 338.9 L345.0 338.2 L346.6 337.4 L348.3 336.7 L350.0 336.0 L351.7 335.4 L353.3 334.8 L355.0 334.2 L356.8 333.7 L358.6 333.1 L360.6 332.5 L362.8 331.9 L365.0 331.2 L367.4 330.5 L369.9 329.8 L372.4 329.1 L375.0 328.5 L377.9 327.8 L381.1 327.2 L384.4 326.5 L387.5 325.9 L390.1 325.4 L392.0 325.0 L392.0 406.0 L391.0 406.0 L387.1 405.3 L383.6 404.5 L380.3 403.7 L377.4 402.9 L374.6 402.2 L372.0 401.5 L369.6 400.9 L367.6 400.3 L365.7 399.7 L364.0 399.2 L362.3 398.6 L360.6 398.0 L358.8 397.4 L357.1 396.7 L355.4 396.1 L353.8 395.4 L352.1 394.7 L350.5 394.0 L348.9 393.3 L347.2 392.6 L345.6 391.8 L344.0 391.1 L342.5 390.3 L341.0 389.5 L339.6 388.7 L338.1 387.9 L336.8 387.1 L335.5 386.3 L334.2 385.4 L333.0 384.5 L331.9 383.5 L330.8 382.5 L329.8 381.4 L328.8 380.3 L327.9 379.2 L327.0 378.0 L326.2 376.8 L325.4 375.4 L324.8 374.1 L324.1 372.7 L323.5 371.4 L323.0 370.0 L322.5 368.6 L322.1 367.0 L321.8 365.5 L321.4 364.1 L321.2 362.9 L321.0 362.0Z" fill="#fff"/>
<path d="M326.2 351.0L328.0 378.4 M331.9 349.8L336.0 385.6 M342.5 344.8L348.0 391.9 M356.0 337.0L360.5 397.0 M372.9 330.7L375.0 401.3 M328.7 351.5 L330.0 350.5 L331.4 349.5 L333.0 348.5 L334.8 347.5 L336.5 346.5 L338.3 345.5 L340.0 344.6 L341.7 343.7 L343.3 342.9 L345.0 342.2 L346.6 341.4 L348.3 340.7 L350.0 340.0 L351.7 339.4 L353.3 338.8 L355.0 338.2 L356.8 337.7 L358.6 337.1 L360.6 336.5 L362.8 335.9 L365.0 335.2 L367.4 334.5 L369.9 333.8 L372.4 333.1 L375.0 332.5 L377.9 331.8 L381.1 331.2 L384.4 330.5 L387.5 329.9 L390.1 329.4 L392.0 329.0 M335.8 374.6 L337.9 373.6 L340.9 372.2 L344.3 370.5 L347.6 369.0 L350.6 367.5 L353.7 366.0 L356.8 364.6 L360.0 363.3 L363.2 362.3 L366.4 361.5 L369.7 360.8 L373.4 360.0 L377.9 359.0 L383.0 358.0 L387.7 357.1 L391.0 356.4 M360.0 390.3 L362.6 389.6 L366.3 388.6 L370.5 387.4 L374.6 386.3 L379.0 385.2 L383.7 384.0 L388.0 382.9 L391.0 382.2" fill="none" stroke="#8c8c8c" stroke-width="1.700"/>
<path d="M391.300 325V712 M391.300 657L470 655 M470 293V655 M640 325V656 M470 655L381.600 727.600 M470 655L640 656L917.500 786" fill="none" stroke="#7c92dc" stroke-width="2.600"/>
<path d="M392 470L700 365M392 520L600 440M392 560L560 505M380 690L470 660M380 735L540 690" fill="none" stroke="#9a9a9a" stroke-width="1" stroke-dasharray="14 5"/>
<path d="M597.6 505.3 L598.9 505.1 L600.8 505.0 L603.1 504.8 L605.8 504.7 L609.0 504.8 L612.7 504.9 L616.6 505.1 L620.7 505.5 L624.8 506.0 L629.2 506.6 L633.6 507.3 L638.2 508.2 L643.0 509.2 L647.9 510.3 L652.8 511.5 L657.7 512.9 L662.5 514.2 L667.3 515.7 L672.0 517.3 L676.4 518.9 L680.5 520.6 L684.3 522.3 L687.9 524.2 L691.0 526.1 L693.7 528.3 L696.1 530.6 L698.1 533.0 L699.8 535.2 L701.1 537.4 L702.0 539.6 L702.7 541.5 L703.2 542.9 M597.6 508.7 L598.9 508.5 L600.8 508.4 L603.1 508.2 L605.8 508.1 L609.0 508.2 L612.7 508.3 L616.6 508.5 L620.7 508.9 L624.8 509.4 L629.2 510.0 L633.6 510.7 L638.2 511.6 L643.0 512.6 L647.9 513.7 L652.8 514.9 L657.7 516.3 L662.5 517.6 L667.3 519.1 L672.0 520.7 L676.4 522.3 L680.5 524.0 L684.3 525.7 L687.9 527.6 L691.0 529.5 L693.7 531.7 L696.1 534.0 L698.1 536.4 L699.8 538.6 L701.1 540.8 L702.0 543.0 L702.7 544.9 L703.2 546.3 M597.6 546.9 L598.9 546.7 L600.8 546.4 L603.1 546.1 L605.8 545.9 L608.9 545.8 L612.5 545.8 L616.3 545.9 L620.2 546.1 L624.3 546.4 L628.5 546.9 L632.9 547.4 L637.3 548.1 L641.9 549.0 L646.6 549.9 L651.3 551.0 L655.9 552.1 L660.5 553.3 L665.0 554.6 L669.4 556.0 L673.4 557.5 L677.2 559.0 L680.7 560.5 L683.9 562.1 L686.8 563.9 L689.3 565.8 L691.5 567.8 L693.3 569.9 L694.9 571.8 L696.1 573.6 L696.9 575.5 L697.5 577.2 L698.0 578.3 M597.6 550.3 L598.9 550.1 L600.8 549.8 L603.1 549.5 L605.8 549.3 L608.9 549.2 L612.5 549.2 L616.3 549.3 L620.2 549.5 L624.3 549.8 L628.5 550.3 L632.9 550.8 L637.3 551.5 L641.9 552.4 L646.6 553.3 L651.3 554.4 L655.9 555.5 L660.5 556.7 L665.0 558.0 L669.4 559.4 L673.4 560.9 L677.2 562.4 L680.7 563.9 L683.9 565.5 L686.8 567.3 L689.3 569.2 L691.5 571.2 L693.3 573.3 L694.9 575.2 L696.1 577.0 L696.9 578.9 L697.5 580.6 L698.0 581.7 M597.5 588.4 L598.9 588.1 L600.8 587.7 L603.2 587.2 L605.9 586.9 L608.9 586.7 L612.3 586.5 L616.0 586.5 L619.8 586.5 L623.8 586.7 L627.9 587.0 L632.1 587.4 L636.4 587.9 L640.8 588.6 L645.3 589.4 L649.8 590.3 L654.2 591.2 L658.4 592.3 L662.7 593.4 L666.7 594.6 L670.4 595.9 L673.9 597.2 L677.1 598.5 L680.0 600.0 L682.7 601.5 L684.9 603.1 L686.9 604.8 L688.5 606.5 L689.9 608.2 L691.0 609.7 L691.8 611.3 L692.4 612.7 L692.8 613.6 M597.5 591.8 L598.9 591.5 L600.8 591.1 L603.2 590.6 L605.9 590.3 L608.9 590.1 L612.3 589.9 L616.0 589.9 L619.8 589.9 L623.8 590.1 L627.9 590.4 L632.1 590.8 L636.4 591.3 L640.8 592.0 L645.3 592.8 L649.8 593.7 L654.2 594.6 L658.4 595.7 L662.7 596.8 L666.7 598.0 L670.4 599.3 L673.9 600.6 L677.1 601.9 L680.0 603.4 L682.7 604.9 L684.9 606.5 L686.9 608.2 L688.5 609.9 L689.9 611.6 L691.0 613.1 L691.8 614.7 L692.4 616.1 L692.8 617.0 M597.5 630.1 L598.9 629.8 L600.9 629.2 L603.2 628.6 L605.9 628.2 L608.8 627.8 L612.2 627.6 L615.7 627.4 L619.4 627.3 L623.2 627.3 L627.2 627.4 L631.4 627.6 L635.5 628.0 L639.7 628.5 L644.0 629.1 L648.3 629.8 L652.4 630.6 L656.4 631.5 L660.3 632.4 L664.0 633.5 L667.4 634.5 L670.6 635.6 L673.5 636.8 L676.1 638.0 L678.5 639.3 L680.5 640.7 L682.2 642.1 L683.7 643.5 L685.0 644.8 L686.0 646.1 L686.7 647.3 L687.3 648.4 L687.7 649.1 M597.5 633.5 L598.9 633.2 L600.9 632.6 L603.2 632.0 L605.9 631.6 L608.8 631.2 L612.2 631.0 L615.7 630.8 L619.4 630.7 L623.2 630.7 L627.2 630.8 L631.4 631.0 L635.5 631.4 L639.7 631.9 L644.0 632.5 L648.3 633.2 L652.4 634.0 L656.4 634.9 L660.3 635.8 L664.0 636.9 L667.4 637.9 L670.6 639.0 L673.5 640.2 L676.1 641.4 L678.5 642.7 L680.5 644.1 L682.2 645.5 L683.7 646.9 L685.0 648.2 L686.0 649.5 L686.7 650.7 L687.3 651.8 L687.7 652.5 M597.5 674.2 L598.9 673.8 L600.9 673.1 L603.3 672.4 L605.9 671.7 L608.8 671.3 L612.0 670.8 L615.4 670.5 L618.9 670.3 L622.6 670.1 L626.6 670.1 L630.6 670.1 L634.6 670.3 L638.6 670.6 L642.7 671.0 L646.7 671.6 L650.6 672.2 L654.3 672.9 L657.8 673.6 L661.2 674.5 L664.3 675.3 L667.1 676.3 L669.7 677.2 L672.0 678.2 L674.0 679.3 L675.8 680.3 L677.3 681.4 L678.6 682.5 L679.7 683.5 L680.6 684.4 L681.3 685.3 L681.8 686.1 L682.2 686.6 M597.5 677.6 L598.9 677.2 L600.9 676.5 L603.3 675.8 L605.9 675.1 L608.8 674.7 L612.0 674.2 L615.4 673.9 L618.9 673.7 L622.6 673.5 L626.6 673.5 L630.6 673.5 L634.6 673.7 L638.6 674.0 L642.7 674.4 L646.7 675.0 L650.6 675.6 L654.3 676.3 L657.8 677.0 L661.2 677.9 L664.3 678.7 L667.1 679.7 L669.7 680.6 L672.0 681.6 L674.0 682.7 L675.8 683.7 L677.3 684.8 L678.6 685.9 L679.7 686.9 L680.6 687.8 L681.3 688.7 L681.8 689.5 L682.2 690.0 M597.5 715.2 L598.9 714.7 L601.0 713.9 L603.4 713.0 L606.0 712.3 L608.7 711.7 L611.8 711.1 L615.1 710.6 L618.5 710.2 L622.1 709.9 L625.9 709.7 L629.8 709.6 L633.7 709.6 L637.5 709.7 L641.4 710.0 L645.3 710.4 L648.9 710.8 L652.3 711.3 L655.5 711.9 L658.5 712.6 L661.3 713.3 L663.8 714.0 L666.1 714.8 L668.1 715.6 L669.9 716.4 L671.5 717.2 L672.8 718.0 L673.9 718.7 L674.8 719.4 L675.6 720.1 L676.3 720.7 L676.8 721.2 L677.1 721.5 M597.5 718.6 L598.9 718.1 L601.0 717.3 L603.4 716.4 L606.0 715.7 L608.7 715.1 L611.8 714.5 L615.1 714.0 L618.5 713.6 L622.1 713.3 L625.9 713.1 L629.8 713.0 L633.7 713.0 L637.5 713.1 L641.4 713.4 L645.3 713.8 L648.9 714.2 L652.3 714.7 L655.5 715.3 L658.5 716.0 L661.3 716.7 L663.8 717.4 L666.1 718.2 L668.1 719.0 L669.9 719.8 L671.5 720.6 L672.8 721.4 L673.9 722.1 L674.8 722.8 L675.6 723.5 L676.3 724.1 L676.8 724.6 L677.1 724.9" fill="none" stroke="#707070" stroke-width="1.300"/>
<path d="M597.6 379.4L597.5 766.0 M605.7 380.3L606.0 762.5 M622.0 382.7L618.0 759.8 M641.0 387.5L632.6 758.4 M663.0 394.2L646.8 758.8 M685.6 402.5L657.8 760.4 M703.8 412.2L665.0 762.6 M715.0 425.0L669.0 764.2 M719.0 436.0L671.0 765.0" fill="none" stroke="#0c0c0c" stroke-width="2.0"/><path d="M597.6 381.4 L598.9 381.5 L600.6 381.7 L602.9 381.9 L605.7 382.3 L609.1 382.7 L613.2 383.3 L617.5 383.9 L622.0 384.7 L626.5 385.7 L631.1 386.8 L636.0 388.1 L641.0 389.5 L646.3 391.0 L651.8 392.7 L657.4 394.4 L663.0 396.2 L668.7 398.2 L674.5 400.2 L680.2 402.3 L685.6 404.5 L690.6 406.8 L695.4 409.1 L699.8 411.5 L703.8 414.2 L707.3 417.2 L710.3 420.5 L712.9 423.8 L715.0 427.0 L716.6 430.1 L717.7 433.3 L718.4 436.1 L719.0 438.0 M597.6 405.2 L598.9 405.2 L600.7 405.3 L602.9 405.5 L605.7 405.8 L609.1 406.1 L613.1 406.6 L617.4 407.1 L621.7 407.9 L626.2 408.7 L630.7 409.8 L635.5 410.9 L640.4 412.2 L645.6 413.6 L651.0 415.2 L656.5 416.8 L661.9 418.6 L667.5 420.4 L673.1 422.3 L678.6 424.3 L683.7 426.4 L688.6 428.5 L693.2 430.7 L697.4 433.0 L701.2 435.5 L704.5 438.4 L707.4 441.5 L709.9 444.6 L711.9 447.6 L713.5 450.6 L714.5 453.5 L715.3 456.1 L715.8 457.9 M597.6 430.9 L598.9 431.0 L600.7 431.0 L603.0 431.1 L605.7 431.3 L609.1 431.5 L613.0 431.9 L617.2 432.4 L621.5 433.0 L625.8 433.8 L630.3 434.7 L635.0 435.8 L639.9 437.0 L644.9 438.3 L650.2 439.7 L655.5 441.2 L660.8 442.9 L666.2 444.6 L671.6 446.4 L676.9 448.3 L681.9 450.2 L686.5 452.2 L690.9 454.3 L695.0 456.5 L698.6 458.9 L701.8 461.6 L704.6 464.5 L706.9 467.5 L708.9 470.2 L710.3 473.0 L711.4 475.8 L712.1 478.2 L712.6 479.9 M597.6 456.7 L598.9 456.7 L600.7 456.6 L603.0 456.6 L605.8 456.7 L609.0 456.9 L612.9 457.2 L617.0 457.6 L621.2 458.1 L625.5 458.8 L629.9 459.7 L634.6 460.6 L639.3 461.7 L644.3 462.9 L649.4 464.2 L654.6 465.6 L659.8 467.2 L664.9 468.8 L670.2 470.5 L675.3 472.2 L680.0 474.1 L684.5 476.0 L688.7 477.9 L692.6 480.0 L696.0 482.3 L699.1 484.8 L701.7 487.5 L703.9 490.3 L705.8 492.8 L707.2 495.4 L708.2 498.0 L708.9 500.2 L709.4 501.8 M597.6 482.5 L598.9 482.4 L600.7 482.3 L603.0 482.2 L605.8 482.2 L609.0 482.3 L612.8 482.5 L616.8 482.8 L620.9 483.3 L625.2 483.9 L629.5 484.6 L634.1 485.4 L638.8 486.4 L643.6 487.5 L648.6 488.7 L653.7 490.1 L658.7 491.5 L663.7 493.0 L668.7 494.5 L673.6 496.2 L678.2 498.0 L682.4 499.7 L686.5 501.6 L690.2 503.5 L693.5 505.6 L696.3 508.0 L698.8 510.5 L701.0 513.1 L702.7 515.5 L704.1 517.8 L705.0 520.2 L705.7 522.3 L706.2 523.7 M597.6 508.3 L598.9 508.1 L600.8 507.9 L603.1 507.8 L605.8 507.7 L609.0 507.7 L612.7 507.9 L616.6 508.1 L620.7 508.4 L624.8 508.9 L629.1 509.5 L633.6 510.3 L638.2 511.1 L642.9 512.1 L647.8 513.2 L652.8 514.5 L657.6 515.8 L662.4 517.2 L667.3 518.6 L672.0 520.2 L676.3 521.8 L680.4 523.5 L684.2 525.2 L687.7 527.0 L690.9 529.0 L693.6 531.2 L696.0 533.5 L698.0 535.9 L699.7 538.1 L701.0 540.2 L701.9 542.4 L702.5 544.3 L703.0 545.7 M597.6 534.0 L598.9 533.9 L600.8 533.6 L603.1 533.3 L605.8 533.2 L609.0 533.1 L612.5 533.2 L616.4 533.3 L620.4 533.6 L624.5 534.0 L628.8 534.5 L633.2 535.1 L637.6 535.9 L642.3 536.7 L647.0 537.8 L651.8 538.9 L656.5 540.1 L661.2 541.4 L665.8 542.7 L670.3 544.2 L674.5 545.7 L678.4 547.2 L682.0 548.8 L685.3 550.5 L688.3 552.3 L690.9 554.3 L693.1 556.5 L695.0 558.7 L696.6 560.7 L697.8 562.7 L698.7 564.7 L699.3 566.4 L699.8 567.6 M597.6 559.8 L598.9 559.6 L600.8 559.2 L603.2 558.9 L605.8 558.7 L608.9 558.5 L612.4 558.5 L616.2 558.5 L620.1 558.7 L624.2 559.0 L628.4 559.4 L632.7 559.9 L637.1 560.6 L641.6 561.4 L646.2 562.3 L650.9 563.3 L655.4 564.4 L659.9 565.5 L664.4 566.8 L668.6 568.1 L672.6 569.5 L676.3 571.0 L679.7 572.5 L682.9 574.0 L685.7 575.7 L688.1 577.5 L690.2 579.5 L692.0 581.5 L693.5 583.3 L694.7 585.1 L695.6 586.9 L696.2 588.4 L696.6 589.5 M597.5 585.6 L598.9 585.3 L600.8 584.9 L603.2 584.5 L605.9 584.1 L608.9 583.9 L612.3 583.8 L616.0 583.8 L619.9 583.8 L623.8 584.0 L628.0 584.3 L632.2 584.8 L636.5 585.3 L640.9 586.0 L645.5 586.8 L650.0 587.7 L654.4 588.7 L658.7 589.7 L662.9 590.9 L667.0 592.1 L670.8 593.4 L674.3 594.7 L677.5 596.1 L680.5 597.6 L683.1 599.1 L685.4 600.7 L687.4 602.5 L689.1 604.3 L690.5 605.9 L691.6 607.5 L692.4 609.1 L693.0 610.5 L693.4 611.5 M597.5 611.4 L598.9 611.0 L600.9 610.5 L603.2 610.0 L605.9 609.6 L608.9 609.3 L612.2 609.1 L615.9 609.0 L619.6 609.0 L623.5 609.1 L627.6 609.3 L631.7 609.6 L636.0 610.0 L640.3 610.6 L644.7 611.3 L649.0 612.1 L653.3 613.0 L657.4 613.9 L661.5 615.0 L665.3 616.1 L668.9 617.3 L672.2 618.5 L675.3 619.7 L678.0 621.1 L680.5 622.4 L682.7 623.9 L684.5 625.5 L686.1 627.1 L687.4 628.5 L688.5 629.9 L689.2 631.3 L689.8 632.6 L690.2 633.4 M597.5 637.1 L598.9 636.7 L600.9 636.2 L603.3 635.6 L605.9 635.1 L608.8 634.7 L612.1 634.4 L615.7 634.2 L619.3 634.1 L623.1 634.1 L627.2 634.2 L631.3 634.4 L635.4 634.8 L639.6 635.2 L643.9 635.8 L648.1 636.5 L652.2 637.3 L656.1 638.1 L660.0 639.1 L663.7 640.1 L667.1 641.1 L670.2 642.2 L673.0 643.4 L675.6 644.6 L677.9 645.8 L679.9 647.1 L681.6 648.5 L683.1 649.9 L684.3 651.1 L685.3 652.4 L686.1 653.6 L686.6 654.6 L687.0 655.3 M597.5 662.9 L598.9 662.5 L600.9 661.8 L603.3 661.1 L605.9 660.6 L608.8 660.1 L612.0 659.8 L615.5 659.5 L619.1 659.3 L622.8 659.2 L626.8 659.2 L630.8 659.3 L634.8 659.5 L638.9 659.9 L643.1 660.3 L647.2 660.9 L651.1 661.6 L654.9 662.3 L658.6 663.2 L662.0 664.0 L665.2 665.0 L668.1 666.0 L670.8 667.0 L673.2 668.1 L675.3 669.2 L677.2 670.3 L678.8 671.5 L680.1 672.7 L681.3 673.7 L682.2 674.8 L682.9 675.8 L683.4 676.7 L683.8 677.3 M597.5 688.7 L598.9 688.2 L600.9 687.5 L603.3 686.7 L605.9 686.1 L608.8 685.5 L611.9 685.1 L615.3 684.7 L618.8 684.4 L622.5 684.2 L626.4 684.1 L630.3 684.1 L634.3 684.2 L638.3 684.5 L642.3 684.9 L646.3 685.3 L650.0 685.9 L653.6 686.5 L657.1 687.2 L660.4 688.0 L663.4 688.8 L666.1 689.7 L668.6 690.6 L670.8 691.6 L672.8 692.5 L674.5 693.5 L675.9 694.5 L677.1 695.5 L678.2 696.4 L679.1 697.2 L679.7 698.0 L680.2 698.7 L680.6 699.2 M597.5 714.5 L598.9 713.9 L601.0 713.1 L603.4 712.3 L606.0 711.5 L608.8 710.9 L611.8 710.4 L615.1 709.9 L618.5 709.5 L622.1 709.3 L626.0 709.0 L629.9 708.9 L633.7 708.9 L637.6 709.1 L641.5 709.4 L645.3 709.8 L649.0 710.2 L652.4 710.7 L655.6 711.3 L658.7 712.0 L661.5 712.7 L664.0 713.5 L666.3 714.3 L668.4 715.1 L670.2 715.9 L671.7 716.7 L673.1 717.5 L674.2 718.3 L675.1 719.0 L675.9 719.6 L676.6 720.2 L677.1 720.8 L677.4 721.1 M597.5 740.2 L598.9 739.6 L601.0 738.8 L603.4 737.8 L606.0 737.0 L608.7 736.3 L611.7 735.7 L614.9 735.2 L618.3 734.7 L621.8 734.3 L625.6 734.0 L629.4 733.8 L633.2 733.7 L636.9 733.7 L640.7 733.9 L644.4 734.2 L647.9 734.5 L651.1 734.9 L654.2 735.4 L657.0 736.0 L659.7 736.6 L662.0 737.2 L664.1 737.9 L665.9 738.6 L667.6 739.3 L669.0 739.9 L670.2 740.5 L671.2 741.1 L672.1 741.6 L672.8 742.0 L673.4 742.5 L673.9 742.8 L674.2 743.1" fill="none" stroke="#0c0c0c" stroke-width="1.500"/>
<path d="M338.5 484.4 L339.2 486.8 L340.1 490.2 L341.2 493.8 L342.3 496.8 L343.4 498.8 L344.6 500.4 L345.8 501.8 L347.1 503.2 L348.6 504.7 L350.2 506.1 L351.9 507.5 L353.7 508.7 L355.6 509.9 L357.6 511.0 L359.6 512.1 L361.8 513.1 L364.1 514.1 L366.5 515.2 L368.9 516.2 L371.4 517.1 L373.7 518.0 L376.1 518.9 L378.5 519.7 L381.0 520.5 L383.6 521.3 L386.2 522.0 L388.9 522.7 L391.8 523.4 L394.9 524.2 L398.2 524.9 L401.6 525.6 L405.2 526.3 L409.0 527.0 L413.0 527.6 L417.2 528.2 L421.6 528.7 L426.1 529.3 L430.8 529.8 L435.6 530.2 L440.5 530.6 L445.5 530.9 L450.5 531.2 L455.6 531.4 L460.6 531.5 L465.5 531.6 L470.3 531.6 L475.1 531.5 L479.9 531.4 L484.8 531.3 L489.6 531.1 L494.5 530.8 L499.3 530.4 L504.1 530.0 L508.9 529.4 L513.7 528.7 L518.5 528.1 L523.5 527.3 L528.5 526.5 L533.4 525.7 L538.0 524.9 L542.2 524.1 L546.1 523.5 L549.9 522.7 L553.7 521.9 L557.6 521.0 L561.5 520.0 L565.4 518.9 L569.0 517.8 L572.6 516.7 L576.0 515.6 L579.3 514.5 L582.2 513.4 L584.8 512.3 L587.1 511.2 L589.3 510.2 L591.2 509.2 L593.1 508.1 L595.0 507.0 L596.5 506.0 L597.6 505.3 M338.5 487.8 L339.2 490.2 L340.1 493.6 L341.2 497.2 L342.3 500.2 L343.4 502.2 L344.6 503.8 L345.8 505.2 L347.1 506.6 L348.6 508.1 L350.2 509.5 L351.9 510.9 L353.7 512.1 L355.6 513.3 L357.6 514.4 L359.6 515.5 L361.8 516.5 L364.1 517.5 L366.5 518.6 L368.9 519.6 L371.4 520.5 L373.7 521.4 L376.1 522.3 L378.5 523.1 L381.0 523.9 L383.6 524.7 L386.2 525.4 L388.9 526.1 L391.8 526.8 L394.9 527.6 L398.2 528.3 L401.6 529.0 L405.2 529.7 L409.0 530.4 L413.0 531.0 L417.2 531.6 L421.6 532.1 L426.1 532.7 L430.8 533.2 L435.6 533.6 L440.5 534.0 L445.5 534.3 L450.5 534.6 L455.6 534.8 L460.6 534.9 L465.5 535.0 L470.3 535.0 L475.1 534.9 L479.9 534.8 L484.8 534.7 L489.6 534.5 L494.5 534.2 L499.3 533.8 L504.1 533.4 L508.9 532.8 L513.7 532.1 L518.5 531.5 L523.5 530.7 L528.5 529.9 L533.4 529.1 L538.0 528.3 L542.2 527.5 L546.1 526.9 L549.9 526.1 L553.7 525.3 L557.6 524.4 L561.5 523.4 L565.4 522.3 L569.0 521.2 L572.6 520.1 L576.0 519.0 L579.3 517.9 L582.2 516.8 L584.8 515.7 L587.1 514.6 L589.3 513.6 L591.2 512.6 L593.1 511.5 L595.0 510.4 L596.5 509.4 L597.6 508.7 M344.0 524.9 L344.8 527.5 L345.9 531.2 L347.2 535.2 L348.4 538.3 L349.6 540.4 L350.9 541.9 L352.1 543.1 L353.5 544.4 L355.1 545.8 L356.7 547.1 L358.4 548.4 L360.1 549.6 L362.0 550.7 L363.9 551.7 L365.9 552.7 L367.9 553.7 L370.2 554.6 L372.5 555.6 L374.9 556.6 L377.2 557.5 L379.5 558.3 L381.8 559.2 L384.2 559.9 L386.6 560.7 L389.1 561.4 L391.6 562.1 L394.2 562.8 L397.0 563.4 L400.0 564.1 L403.1 564.8 L406.4 565.5 L409.8 566.2 L413.4 566.8 L417.2 567.3 L421.2 567.9 L425.3 568.4 L429.6 568.9 L434.2 569.4 L438.8 569.9 L443.5 570.3 L448.3 570.6 L453.2 570.9 L458.1 571.1 L462.9 571.2 L467.6 571.3 L472.3 571.3 L476.9 571.3 L481.6 571.2 L486.2 571.0 L490.8 570.9 L495.4 570.6 L500.1 570.3 L504.7 569.8 L509.4 569.3 L514.0 568.7 L518.7 568.1 L523.5 567.4 L528.3 566.7 L533.1 565.9 L537.5 565.2 L541.6 564.5 L545.5 563.8 L549.2 563.1 L552.9 562.4 L556.8 561.5 L560.6 560.6 L564.4 559.6 L568.1 558.6 L571.6 557.6 L575.0 556.5 L578.3 555.5 L581.3 554.5 L584.0 553.5 L586.5 552.5 L588.7 551.5 L590.8 550.6 L592.8 549.5 L594.8 548.5 L596.4 547.6 L597.6 546.9 M344.0 528.3 L344.8 530.9 L345.9 534.6 L347.2 538.6 L348.4 541.7 L349.6 543.8 L350.9 545.3 L352.1 546.5 L353.5 547.8 L355.1 549.2 L356.7 550.5 L358.4 551.8 L360.1 553.0 L362.0 554.1 L363.9 555.1 L365.9 556.1 L367.9 557.1 L370.2 558.0 L372.5 559.0 L374.9 560.0 L377.2 560.9 L379.5 561.7 L381.8 562.6 L384.2 563.3 L386.6 564.1 L389.1 564.8 L391.6 565.5 L394.2 566.2 L397.0 566.8 L400.0 567.5 L403.1 568.2 L406.4 568.9 L409.8 569.6 L413.4 570.2 L417.2 570.7 L421.2 571.3 L425.3 571.8 L429.6 572.3 L434.2 572.8 L438.8 573.3 L443.5 573.7 L448.3 574.0 L453.2 574.3 L458.1 574.5 L462.9 574.6 L467.6 574.7 L472.3 574.7 L476.9 574.7 L481.6 574.6 L486.2 574.4 L490.8 574.3 L495.4 574.0 L500.1 573.7 L504.7 573.2 L509.4 572.7 L514.0 572.1 L518.7 571.5 L523.5 570.8 L528.3 570.1 L533.1 569.3 L537.5 568.6 L541.6 567.9 L545.5 567.2 L549.2 566.5 L552.9 565.8 L556.8 564.9 L560.6 564.0 L564.4 563.0 L568.1 562.0 L571.6 561.0 L575.0 559.9 L578.3 558.9 L581.3 557.9 L584.0 556.9 L586.5 555.9 L588.7 554.9 L590.8 554.0 L592.8 552.9 L594.8 551.9 L596.4 551.0 L597.6 550.3 M349.6 565.2 L350.5 568.0 L351.7 572.1 L353.2 576.3 L354.6 579.7 L355.9 581.8 L357.1 583.2 L358.5 584.3 L359.9 585.5 L361.5 586.8 L363.1 588.0 L364.8 589.2 L366.5 590.3 L368.3 591.3 L370.1 592.2 L372.1 593.1 L374.1 594.1 L376.2 595.0 L378.5 595.9 L380.8 596.8 L383.1 597.7 L385.3 598.5 L387.6 599.3 L389.8 600.0 L392.1 600.7 L394.5 601.4 L396.9 602.0 L399.5 602.7 L402.2 603.3 L405.0 603.9 L408.0 604.6 L411.1 605.2 L414.4 605.8 L417.9 606.4 L421.4 607.0 L425.2 607.5 L429.1 608.0 L433.2 608.5 L437.5 609.0 L441.9 609.4 L446.4 609.8 L451.0 610.1 L455.8 610.4 L460.5 610.6 L465.1 610.7 L469.7 610.8 L474.2 610.9 L478.7 610.8 L483.2 610.8 L487.6 610.6 L492.0 610.5 L496.4 610.3 L500.8 610.0 L505.3 609.6 L509.8 609.1 L514.3 608.6 L518.9 608.0 L523.5 607.4 L528.1 606.7 L532.7 606.0 L537.0 605.3 L541.1 604.7 L544.8 604.0 L548.5 603.4 L552.2 602.7 L556.0 601.9 L559.8 601.0 L563.5 600.1 L567.1 599.2 L570.6 598.2 L574.1 597.3 L577.4 596.3 L580.4 595.4 L583.2 594.5 L585.8 593.6 L588.2 592.7 L590.4 591.8 L592.5 590.9 L594.6 589.9 L596.3 589.0 L597.5 588.4 M349.6 568.6 L350.5 571.4 L351.7 575.5 L353.2 579.7 L354.6 583.1 L355.9 585.2 L357.1 586.6 L358.5 587.7 L359.9 588.9 L361.5 590.2 L363.1 591.4 L364.8 592.6 L366.5 593.7 L368.3 594.7 L370.1 595.6 L372.1 596.5 L374.1 597.5 L376.2 598.4 L378.5 599.3 L380.8 600.2 L383.1 601.1 L385.3 601.9 L387.6 602.7 L389.8 603.4 L392.1 604.1 L394.5 604.8 L396.9 605.4 L399.5 606.1 L402.2 606.7 L405.0 607.3 L408.0 608.0 L411.1 608.6 L414.4 609.2 L417.9 609.8 L421.4 610.4 L425.2 610.9 L429.1 611.4 L433.2 611.9 L437.5 612.4 L441.9 612.8 L446.4 613.2 L451.0 613.5 L455.8 613.8 L460.5 614.0 L465.1 614.1 L469.7 614.2 L474.2 614.3 L478.7 614.2 L483.2 614.2 L487.6 614.0 L492.0 613.9 L496.4 613.7 L500.8 613.4 L505.3 613.0 L509.8 612.5 L514.3 612.0 L518.9 611.4 L523.5 610.8 L528.1 610.1 L532.7 609.4 L537.0 608.7 L541.1 608.1 L544.8 607.4 L548.5 606.8 L552.2 606.1 L556.0 605.3 L559.8 604.4 L563.5 603.5 L567.1 602.6 L570.6 601.6 L574.1 600.7 L577.4 599.7 L580.4 598.8 L583.2 597.9 L585.8 597.0 L588.2 596.1 L590.4 595.2 L592.5 594.3 L594.6 593.3 L596.3 592.4 L597.5 591.8 M355.1 605.8 L356.1 608.8 L357.6 613.2 L359.2 617.8 L360.7 621.3 L362.1 623.4 L363.5 624.7 L364.9 625.7 L366.4 626.8 L367.9 628.0 L369.6 629.1 L371.3 630.2 L373.0 631.2 L374.7 632.2 L376.5 633.0 L378.3 633.9 L380.2 634.7 L382.3 635.6 L384.5 636.5 L386.8 637.4 L389.0 638.2 L391.2 638.9 L393.3 639.6 L395.5 640.3 L397.7 641.0 L400.0 641.6 L402.3 642.2 L404.8 642.8 L407.3 643.4 L410.1 644.0 L413.0 644.6 L416.0 645.2 L419.1 645.8 L422.3 646.3 L425.7 646.8 L429.2 647.3 L432.9 647.8 L436.8 648.3 L440.9 648.7 L445.1 649.2 L449.4 649.6 L453.8 649.9 L458.4 650.2 L462.9 650.4 L467.4 650.5 L471.8 650.6 L476.2 650.7 L480.5 650.7 L484.8 650.6 L489.0 650.5 L493.2 650.4 L497.3 650.2 L501.6 649.9 L505.9 649.6 L510.3 649.2 L514.7 648.7 L519.0 648.2 L523.5 647.6 L528.0 647.0 L532.4 646.3 L536.6 645.7 L540.5 645.1 L544.2 644.5 L547.8 643.9 L551.4 643.2 L555.1 642.5 L558.9 641.7 L562.5 640.8 L566.1 640.0 L569.6 639.2 L573.1 638.3 L576.4 637.5 L579.5 636.6 L582.4 635.8 L585.1 635.0 L587.6 634.2 L590.0 633.3 L592.2 632.5 L594.4 631.5 L596.2 630.7 L597.5 630.1 M355.1 609.2 L356.1 612.2 L357.6 616.6 L359.2 621.2 L360.7 624.7 L362.1 626.8 L363.5 628.1 L364.9 629.1 L366.4 630.2 L367.9 631.4 L369.6 632.5 L371.3 633.6 L373.0 634.6 L374.7 635.6 L376.5 636.4 L378.3 637.3 L380.2 638.1 L382.3 639.0 L384.5 639.9 L386.8 640.8 L389.0 641.6 L391.2 642.3 L393.3 643.0 L395.5 643.7 L397.7 644.4 L400.0 645.0 L402.3 645.6 L404.8 646.2 L407.3 646.8 L410.1 647.4 L413.0 648.0 L416.0 648.6 L419.1 649.2 L422.3 649.7 L425.7 650.2 L429.2 650.7 L432.9 651.2 L436.8 651.7 L440.9 652.1 L445.1 652.6 L449.4 653.0 L453.8 653.3 L458.4 653.6 L462.9 653.8 L467.4 653.9 L471.8 654.0 L476.2 654.1 L480.5 654.1 L484.8 654.0 L489.0 653.9 L493.2 653.8 L497.3 653.6 L501.6 653.3 L505.9 653.0 L510.3 652.6 L514.7 652.1 L519.0 651.6 L523.5 651.0 L528.0 650.4 L532.4 649.7 L536.6 649.1 L540.5 648.5 L544.2 647.9 L547.8 647.3 L551.4 646.6 L555.1 645.9 L558.9 645.1 L562.5 644.2 L566.1 643.4 L569.6 642.6 L573.1 641.7 L576.4 640.9 L579.5 640.0 L582.4 639.2 L585.1 638.4 L587.6 637.6 L590.0 636.7 L592.2 635.9 L594.4 634.9 L596.2 634.1 L597.5 633.5 M361.0 648.7 L362.1 651.9 L363.7 656.7 L365.5 661.5 L367.2 665.3 L368.7 667.4 L370.2 668.6 L371.6 669.5 L373.1 670.4 L374.7 671.5 L376.4 672.6 L378.1 673.5 L379.8 674.5 L381.5 675.3 L383.1 676.1 L384.9 676.9 L386.7 677.6 L388.7 678.5 L390.9 679.3 L393.1 680.1 L395.3 680.9 L397.3 681.6 L399.4 682.2 L401.4 682.9 L403.6 683.5 L405.8 684.1 L408.0 684.6 L410.3 685.2 L412.8 685.8 L415.4 686.3 L418.2 686.9 L421.0 687.4 L424.0 687.9 L427.0 688.4 L430.1 688.9 L433.4 689.3 L436.8 689.8 L440.5 690.3 L444.4 690.7 L448.5 691.2 L452.6 691.6 L456.8 691.9 L461.1 692.2 L465.5 692.4 L469.8 692.6 L474.0 692.7 L478.2 692.7 L482.4 692.7 L486.5 692.7 L490.5 692.6 L494.4 692.5 L498.4 692.3 L502.4 692.1 L506.5 691.8 L510.7 691.4 L515.0 691.0 L519.2 690.6 L523.5 690.1 L527.8 689.5 L532.0 688.9 L536.0 688.4 L539.9 687.8 L543.5 687.3 L547.0 686.7 L550.6 686.1 L554.3 685.4 L557.9 684.6 L561.6 683.9 L565.1 683.1 L568.6 682.4 L572.0 681.6 L575.4 680.9 L578.6 680.1 L581.5 679.4 L584.4 678.7 L587.0 677.9 L589.5 677.2 L591.9 676.4 L594.2 675.5 L596.2 674.8 L597.5 674.2 M361.0 652.1 L362.1 655.3 L363.7 660.1 L365.5 664.9 L367.2 668.7 L368.7 670.8 L370.2 672.0 L371.6 672.9 L373.1 673.8 L374.7 674.9 L376.4 676.0 L378.1 676.9 L379.8 677.9 L381.5 678.7 L383.1 679.5 L384.9 680.3 L386.7 681.0 L388.7 681.9 L390.9 682.7 L393.1 683.5 L395.3 684.3 L397.3 685.0 L399.4 685.6 L401.4 686.3 L403.6 686.9 L405.8 687.5 L408.0 688.0 L410.3 688.6 L412.8 689.2 L415.4 689.7 L418.2 690.3 L421.0 690.8 L424.0 691.3 L427.0 691.8 L430.1 692.3 L433.4 692.7 L436.8 693.2 L440.5 693.7 L444.4 694.1 L448.5 694.6 L452.6 695.0 L456.8 695.3 L461.1 695.6 L465.5 695.8 L469.8 696.0 L474.0 696.1 L478.2 696.1 L482.4 696.1 L486.5 696.1 L490.5 696.0 L494.4 695.9 L498.4 695.7 L502.4 695.5 L506.5 695.2 L510.7 694.8 L515.0 694.4 L519.2 694.0 L523.5 693.5 L527.8 692.9 L532.0 692.3 L536.0 691.8 L539.9 691.2 L543.5 690.7 L547.0 690.1 L550.6 689.5 L554.3 688.8 L557.9 688.0 L561.6 687.3 L565.1 686.5 L568.6 685.8 L572.0 685.0 L575.4 684.3 L578.6 683.5 L581.5 682.8 L584.4 682.1 L587.0 681.3 L589.5 680.6 L591.9 679.8 L594.2 678.9 L596.2 678.2 L597.5 677.6 M366.5 688.5 L367.7 692.0 L369.5 697.0 L371.4 702.2 L373.3 706.1 L374.8 708.2 L376.4 709.4 L377.9 710.1 L379.4 711.0 L381.1 712.0 L382.8 712.9 L384.4 713.8 L386.1 714.7 L387.7 715.4 L389.3 716.2 L391.0 716.8 L392.8 717.6 L394.7 718.3 L396.8 719.1 L399.0 719.9 L401.1 720.6 L403.1 721.2 L405.0 721.9 L407.0 722.4 L409.0 723.0 L411.2 723.5 L413.3 724.1 L415.5 724.6 L417.9 725.1 L420.4 725.6 L423.0 726.2 L425.7 726.7 L428.5 727.1 L431.4 727.6 L434.3 728.0 L437.3 728.4 L440.6 728.9 L444.0 729.3 L447.7 729.8 L451.6 730.2 L455.5 730.6 L459.5 730.9 L463.7 731.2 L467.9 731.4 L472.0 731.6 L476.1 731.7 L480.2 731.8 L484.2 731.8 L488.1 731.8 L491.9 731.7 L495.6 731.6 L499.3 731.5 L503.1 731.3 L507.1 731.1 L511.2 730.7 L515.3 730.4 L519.4 730.0 L523.5 729.5 L527.6 729.1 L531.7 728.5 L535.6 728.0 L539.3 727.5 L542.9 727.0 L546.4 726.5 L549.9 725.9 L553.5 725.2 L557.1 724.6 L560.6 723.9 L564.1 723.2 L567.6 722.6 L571.1 721.9 L574.5 721.3 L577.7 720.6 L580.7 719.9 L583.7 719.3 L586.5 718.6 L589.1 717.9 L591.6 717.2 L594.0 716.4 L596.1 715.7 L597.5 715.2 M366.5 691.9 L367.7 695.4 L369.5 700.4 L371.4 705.6 L373.3 709.5 L374.8 711.6 L376.4 712.8 L377.9 713.5 L379.4 714.4 L381.1 715.4 L382.8 716.3 L384.4 717.2 L386.1 718.1 L387.7 718.8 L389.3 719.6 L391.0 720.2 L392.8 721.0 L394.7 721.7 L396.8 722.5 L399.0 723.3 L401.1 724.0 L403.1 724.6 L405.0 725.3 L407.0 725.8 L409.0 726.4 L411.2 726.9 L413.3 727.5 L415.5 728.0 L417.9 728.5 L420.4 729.0 L423.0 729.6 L425.7 730.1 L428.5 730.5 L431.4 731.0 L434.3 731.4 L437.3 731.8 L440.6 732.3 L444.0 732.7 L447.7 733.2 L451.6 733.6 L455.5 734.0 L459.5 734.3 L463.7 734.6 L467.9 734.8 L472.0 735.0 L476.1 735.1 L480.2 735.2 L484.2 735.2 L488.1 735.2 L491.9 735.1 L495.6 735.0 L499.3 734.9 L503.1 734.7 L507.1 734.5 L511.2 734.1 L515.3 733.8 L519.4 733.4 L523.5 732.9 L527.6 732.5 L531.7 731.9 L535.6 731.4 L539.3 730.9 L542.9 730.4 L546.4 729.9 L549.9 729.3 L553.5 728.6 L557.1 728.0 L560.6 727.3 L564.1 726.6 L567.6 726.0 L571.1 725.3 L574.5 724.7 L577.7 724.0 L580.7 723.3 L583.7 722.7 L586.5 722.0 L589.1 721.3 L591.6 720.6 L594.0 719.8 L596.1 719.1 L597.5 718.6" fill="none" stroke="#707070" stroke-width="1.300"/>
<path d="M321.5 362.0L373.0 738.0 M323.5 371.3L380.5 756.8 M327.5 378.7L387.0 761.2 M334.0 385.3L393.7 764.5 M343.0 390.5L400.0 767.1 M353.3 395.2L408.0 769.9 M364.0 399.2L415.6 772.1 M376.0 402.6L424.0 774.0 M391.0 406.0L434.0 775.8 M410.0 408.8L445.0 777.4 M431.4 410.7L459.0 779.1 M453.7 411.6L474.7 780.1 M475.0 411.4L490.0 780.3 M497.0 410.0L504.0 780.0 M518.0 407.1L519.6 778.9 M539.5 403.1L535.0 777.2 M556.0 399.7L549.0 775.3 M572.0 394.7L563.0 773.0 M585.0 389.1L576.6 770.8 M592.5 384.0L588.6 768.5 M597.6 379.4L597.5 766.0" fill="none" stroke="#0c0c0c" stroke-width="2.0"/><path d="M321.5 364.0 L321.8 365.7 L322.2 368.2 L322.8 370.9 L323.5 373.3 L324.3 375.3 L325.2 377.2 L326.3 379.0 L327.5 380.7 L328.9 382.4 L330.4 384.1 L332.1 385.7 L334.0 387.3 L336.0 388.7 L338.3 390.0 L340.6 391.3 L343.0 392.5 L345.5 393.8 L348.0 394.9 L350.7 396.1 L353.3 397.2 L355.9 398.2 L358.5 399.3 L361.2 400.2 L364.0 401.2 L366.8 402.1 L369.7 402.9 L372.8 403.7 L376.0 404.6 L379.4 405.4 L383.1 406.3 L386.9 407.2 L391.0 408.0 L395.4 408.8 L400.1 409.5 L405.0 410.2 L410.0 410.8 L415.2 411.4 L420.5 411.9 L425.9 412.3 L431.4 412.7 L436.9 413.1 L442.6 413.3 L448.2 413.5 L453.7 413.6 L459.1 413.7 L464.4 413.7 L469.6 413.6 L475.0 413.4 L480.5 413.2 L486.0 412.9 L491.6 412.5 L497.0 412.0 L502.3 411.4 L507.5 410.7 L512.7 409.9 L518.0 409.1 L523.5 408.1 L529.0 407.1 L534.5 406.1 L539.5 405.1 L544.0 404.2 L548.1 403.5 L552.0 402.6 L556.0 401.7 L560.1 400.6 L564.2 399.3 L568.2 398.0 L572.0 396.7 L575.6 395.3 L579.0 393.9 L582.2 392.5 L585.0 391.1 L587.3 389.8 L589.2 388.5 L590.9 387.2 L592.5 386.0 L594.1 384.7 L595.5 383.4 L596.7 382.2 L597.6 381.4 M324.9 387.1 L325.3 388.9 L325.9 391.6 L326.5 394.5 L327.3 397.0 L328.2 399.0 L329.1 400.8 L330.2 402.5 L331.5 404.2 L332.9 405.9 L334.4 407.5 L336.1 409.1 L338.0 410.6 L340.0 411.9 L342.2 413.2 L344.4 414.4 L346.8 415.6 L349.2 416.8 L351.8 418.0 L354.4 419.1 L356.9 420.2 L359.5 421.2 L362.1 422.2 L364.7 423.1 L367.4 424.0 L370.2 424.9 L373.1 425.7 L376.0 426.5 L379.2 427.3 L382.6 428.2 L386.1 429.0 L389.9 429.9 L393.9 430.7 L398.2 431.4 L402.7 432.1 L407.5 432.8 L412.3 433.4 L417.4 433.9 L422.6 434.4 L427.9 434.9 L433.2 435.3 L438.7 435.6 L444.2 435.9 L449.7 436.1 L455.1 436.2 L460.4 436.2 L465.6 436.2 L470.8 436.1 L476.0 436.0 L481.3 435.8 L486.7 435.5 L492.1 435.2 L497.5 434.7 L502.7 434.1 L507.8 433.4 L512.9 432.7 L518.1 431.8 L523.5 430.9 L528.9 430.0 L534.3 429.0 L539.2 428.0 L543.6 427.2 L547.7 426.4 L551.6 425.6 L555.5 424.7 L559.6 423.6 L563.7 422.5 L567.6 421.2 L571.4 419.9 L575.0 418.6 L578.4 417.3 L581.6 415.9 L584.4 414.6 L586.8 413.3 L588.8 412.0 L590.6 410.8 L592.2 409.6 L593.9 408.4 L595.4 407.1 L596.7 406.0 L597.6 405.2 M328.4 412.1 L328.8 414.1 L329.5 417.0 L330.2 420.0 L331.1 422.7 L332.0 424.7 L333.0 426.5 L334.2 428.1 L335.4 429.7 L336.9 431.3 L338.4 432.9 L340.1 434.4 L342.0 435.8 L343.9 437.2 L346.1 438.4 L348.3 439.6 L350.6 440.7 L353.0 441.9 L355.5 443.0 L358.0 444.1 L360.6 445.2 L363.1 446.1 L365.6 447.1 L368.2 448.0 L370.9 448.9 L373.6 449.7 L376.4 450.5 L379.3 451.3 L382.4 452.1 L385.7 452.9 L389.2 453.7 L392.8 454.5 L396.7 455.3 L400.9 456.0 L405.3 456.7 L409.9 457.4 L414.7 457.9 L419.6 458.5 L424.7 459.0 L429.8 459.5 L435.1 459.8 L440.4 460.2 L445.8 460.4 L451.2 460.6 L456.5 460.8 L461.7 460.8 L466.8 460.8 L471.9 460.7 L477.0 460.6 L482.2 460.4 L487.5 460.1 L492.7 459.8 L497.9 459.4 L503.0 458.8 L508.1 458.2 L513.1 457.4 L518.2 456.6 L523.5 455.8 L528.8 454.8 L534.0 453.9 L538.9 453.0 L543.3 452.2 L547.3 451.4 L551.2 450.7 L555.1 449.8 L559.1 448.7 L563.1 447.6 L567.1 446.4 L570.8 445.1 L574.4 443.9 L577.8 442.6 L581.0 441.3 L583.9 440.0 L586.3 438.8 L588.4 437.6 L590.2 436.4 L592.0 435.2 L593.7 434.0 L595.3 432.8 L596.6 431.7 L597.6 430.9 M331.8 437.2 L332.3 439.3 L333.1 442.4 L334.0 445.6 L334.9 448.4 L335.9 450.4 L336.9 452.1 L338.1 453.7 L339.4 455.2 L340.8 456.8 L342.4 458.3 L344.1 459.8 L345.9 461.1 L347.9 462.4 L350.0 463.6 L352.1 464.7 L354.4 465.9 L356.8 467.0 L359.2 468.1 L361.7 469.1 L364.2 470.1 L366.7 471.1 L369.2 472.0 L371.7 472.9 L374.3 473.7 L377.0 474.6 L379.7 475.3 L382.6 476.1 L385.6 476.9 L388.8 477.6 L392.2 478.4 L395.8 479.2 L399.6 480.0 L403.7 480.7 L407.9 481.3 L412.4 481.9 L417.0 482.5 L421.8 483.1 L426.7 483.6 L431.8 484.0 L436.9 484.4 L442.1 484.7 L447.4 485.0 L452.7 485.2 L457.9 485.3 L463.0 485.4 L468.0 485.4 L473.0 485.3 L478.0 485.2 L483.1 485.0 L488.2 484.8 L493.3 484.4 L498.4 484.0 L503.4 483.5 L508.4 482.9 L513.3 482.2 L518.3 481.4 L523.5 480.6 L528.7 479.7 L533.8 478.8 L538.6 477.9 L542.9 477.1 L546.9 476.4 L550.7 475.7 L554.6 474.8 L558.6 473.8 L562.6 472.7 L566.5 471.5 L570.2 470.4 L573.8 469.2 L577.2 467.9 L580.4 466.7 L583.3 465.5 L585.8 464.3 L588.0 463.1 L589.9 462.0 L591.7 460.9 L593.5 459.7 L595.2 458.5 L596.6 457.5 L597.6 456.7 M335.2 462.3 L335.8 464.5 L336.7 467.8 L337.7 471.2 L338.7 474.1 L339.7 476.1 L340.8 477.8 L342.0 479.2 L343.4 480.7 L344.8 482.2 L346.4 483.7 L348.1 485.1 L349.9 486.4 L351.8 487.6 L353.9 488.8 L356.0 489.9 L358.2 491.0 L360.5 492.0 L362.9 493.1 L365.4 494.1 L367.9 495.1 L370.3 496.0 L372.7 496.9 L375.2 497.8 L377.8 498.6 L380.4 499.4 L383.0 500.1 L385.8 500.9 L388.8 501.6 L392.0 502.4 L395.3 503.2 L398.8 503.9 L402.5 504.6 L406.4 505.3 L410.5 505.9 L414.9 506.5 L419.3 507.1 L424.0 507.6 L428.8 508.1 L433.8 508.6 L438.8 509.0 L443.8 509.3 L449.0 509.5 L454.2 509.7 L459.3 509.9 L464.3 510.0 L469.2 510.0 L474.1 509.9 L479.0 509.8 L484.0 509.6 L488.9 509.4 L493.9 509.1 L498.9 508.7 L503.8 508.2 L508.6 507.6 L513.5 506.9 L518.4 506.2 L523.5 505.4 L528.6 504.6 L533.6 503.7 L538.3 502.9 L542.6 502.1 L546.5 501.4 L550.3 500.7 L554.1 499.8 L558.1 498.9 L562.0 497.8 L565.9 496.7 L569.6 495.6 L573.2 494.4 L576.6 493.2 L579.8 492.1 L582.8 490.9 L585.3 489.8 L587.6 488.7 L589.6 487.6 L591.5 486.5 L593.3 485.4 L595.1 484.2 L596.5 483.2 L597.6 482.5 M338.7 487.3 L339.3 489.7 L340.3 493.2 L341.4 496.8 L342.5 499.8 L343.6 501.8 L344.7 503.4 L346.0 504.8 L347.3 506.2 L348.8 507.7 L350.4 509.1 L352.1 510.4 L353.9 511.7 L355.8 512.9 L357.8 514.0 L359.8 515.0 L362.0 516.1 L364.3 517.1 L366.7 518.1 L369.1 519.1 L371.5 520.1 L373.9 521.0 L376.3 521.8 L378.7 522.7 L381.2 523.5 L383.8 524.2 L386.4 524.9 L389.1 525.7 L392.0 526.4 L395.1 527.1 L398.3 527.9 L401.7 528.6 L405.3 529.3 L409.1 529.9 L413.2 530.5 L417.3 531.1 L421.7 531.7 L426.2 532.2 L430.9 532.7 L435.7 533.1 L440.6 533.5 L445.6 533.8 L450.6 534.1 L455.7 534.3 L460.7 534.5 L465.6 534.5 L470.4 534.5 L475.2 534.5 L480.0 534.4 L484.8 534.2 L489.7 534.0 L494.5 533.7 L499.3 533.4 L504.1 532.9 L508.9 532.3 L513.7 531.7 L518.5 531.0 L523.5 530.3 L528.5 529.4 L533.4 528.6 L538.0 527.8 L542.2 527.1 L546.1 526.4 L549.9 525.7 L553.7 524.9 L557.6 523.9 L561.5 522.9 L565.3 521.9 L569.0 520.8 L572.5 519.7 L576.0 518.6 L579.2 517.4 L582.2 516.3 L584.8 515.3 L587.1 514.2 L589.2 513.2 L591.2 512.1 L593.1 511.1 L594.9 509.9 L596.5 509.0 L597.6 508.3 M342.1 512.4 L342.8 514.9 L343.9 518.5 L345.1 522.4 L346.3 525.5 L347.5 527.5 L348.7 529.1 L349.9 530.4 L351.3 531.7 L352.8 533.1 L354.4 534.5 L356.1 535.8 L357.9 537.0 L359.7 538.1 L361.7 539.2 L363.7 540.2 L365.8 541.2 L368.0 542.2 L370.4 543.2 L372.8 544.1 L375.2 545.1 L377.5 545.9 L379.8 546.8 L382.2 547.5 L384.6 548.3 L387.1 549.1 L389.7 549.8 L392.4 550.4 L395.2 551.1 L398.2 551.9 L401.4 552.6 L404.7 553.3 L408.2 553.9 L411.9 554.5 L415.8 555.1 L419.8 555.7 L424.0 556.2 L428.4 556.7 L433.0 557.2 L437.7 557.7 L442.4 558.1 L447.3 558.4 L452.2 558.7 L457.2 558.9 L462.1 559.0 L466.9 559.1 L471.6 559.1 L476.3 559.1 L481.0 559.0 L485.7 558.8 L490.4 558.6 L495.1 558.4 L499.8 558.0 L504.5 557.6 L509.2 557.0 L513.9 556.4 L518.6 555.8 L523.5 555.1 L528.4 554.3 L533.2 553.5 L537.7 552.8 L541.8 552.1 L545.7 551.4 L549.4 550.7 L553.2 549.9 L557.1 549.0 L560.9 548.1 L564.7 547.0 L568.4 546.0 L571.9 545.0 L575.4 543.9 L578.7 542.8 L581.6 541.8 L584.3 540.8 L586.7 539.7 L588.9 538.7 L590.9 537.8 L592.9 536.7 L594.8 535.7 L596.4 534.7 L597.6 534.0 M345.5 537.5 L346.3 540.1 L347.5 543.9 L348.8 548.0 L350.1 551.2 L351.3 553.3 L352.6 554.7 L353.9 556.0 L355.3 557.2 L356.8 558.6 L358.4 559.9 L360.1 561.1 L361.9 562.3 L363.7 563.3 L365.6 564.3 L367.5 565.3 L369.6 566.3 L371.8 567.2 L374.1 568.2 L376.5 569.2 L378.8 570.0 L381.1 570.9 L383.4 571.7 L385.7 572.4 L388.1 573.2 L390.5 573.9 L393.0 574.6 L395.6 575.2 L398.4 575.9 L401.3 576.6 L404.4 577.3 L407.7 577.9 L411.1 578.6 L414.6 579.2 L418.4 579.7 L422.3 580.3 L426.3 580.8 L430.6 581.3 L435.1 581.8 L439.6 582.2 L444.3 582.6 L449.0 583.0 L453.9 583.2 L458.7 583.4 L463.5 583.6 L468.2 583.7 L472.8 583.7 L477.4 583.6 L482.0 583.6 L486.6 583.4 L491.1 583.3 L495.7 583.0 L500.3 582.7 L504.9 582.3 L509.5 581.8 L514.1 581.2 L518.7 580.6 L523.5 579.9 L528.3 579.2 L533.0 578.4 L537.4 577.7 L541.5 577.0 L545.3 576.4 L549.0 575.7 L552.7 575.0 L556.6 574.1 L560.4 573.2 L564.2 572.2 L567.8 571.2 L571.3 570.2 L574.8 569.2 L578.1 568.2 L581.1 567.2 L583.8 566.2 L586.3 565.3 L588.6 564.3 L590.7 563.4 L592.8 562.4 L594.7 561.4 L596.4 560.5 L597.6 559.8 M349.0 562.5 L349.8 565.3 L351.1 569.3 L352.5 573.6 L353.9 576.9 L355.2 579.0 L356.5 580.4 L357.8 581.5 L359.2 582.7 L360.8 584.0 L362.4 585.3 L364.1 586.4 L365.8 587.5 L367.6 588.6 L369.5 589.5 L371.4 590.4 L373.4 591.4 L375.6 592.3 L377.8 593.2 L380.2 594.2 L382.5 595.0 L384.7 595.8 L386.9 596.6 L389.2 597.3 L391.5 598.0 L393.9 598.7 L396.4 599.4 L398.9 600.0 L401.6 600.7 L404.5 601.3 L407.5 602.0 L410.6 602.6 L413.9 603.2 L417.4 603.8 L421.0 604.3 L424.7 604.9 L428.7 605.4 L432.8 605.9 L437.1 606.4 L441.6 606.8 L446.1 607.2 L450.7 607.5 L455.5 607.8 L460.2 608.0 L464.9 608.1 L469.5 608.2 L474.0 608.3 L478.5 608.2 L483.0 608.2 L487.5 608.0 L491.9 607.9 L496.3 607.7 L500.7 607.4 L505.2 607.0 L509.8 606.5 L514.3 605.9 L518.9 605.4 L523.5 604.7 L528.2 604.0 L532.8 603.3 L537.1 602.6 L541.1 602.0 L544.9 601.4 L548.6 600.7 L552.3 600.0 L556.1 599.2 L559.8 598.3 L563.6 597.4 L567.2 596.4 L570.7 595.5 L574.2 594.6 L577.5 593.6 L580.5 592.7 L583.3 591.7 L585.9 590.8 L588.2 589.9 L590.4 589.0 L592.6 588.1 L594.6 587.1 L596.3 586.2 L597.5 585.6 M352.4 587.6 L353.3 590.5 L354.7 594.7 L356.2 599.1 L357.7 602.6 L359.0 604.7 L360.4 606.0 L361.7 607.1 L363.2 608.2 L364.8 609.5 L366.4 610.7 L368.1 611.8 L369.8 612.8 L371.6 613.8 L373.4 614.7 L375.2 615.6 L377.2 616.5 L379.3 617.4 L381.6 618.3 L383.9 619.2 L386.1 620.0 L388.3 620.8 L390.5 621.5 L392.7 622.2 L395.0 622.9 L397.3 623.6 L399.7 624.2 L402.2 624.8 L404.8 625.4 L407.6 626.1 L410.5 626.7 L413.6 627.3 L416.8 627.9 L420.1 628.4 L423.6 629.0 L427.2 629.5 L431.0 629.9 L435.0 630.4 L439.2 630.9 L443.6 631.4 L448.0 631.7 L452.5 632.1 L457.1 632.3 L461.7 632.6 L466.3 632.7 L470.8 632.8 L475.2 632.8 L479.6 632.8 L484.0 632.7 L488.3 632.6 L492.6 632.5 L496.9 632.3 L501.2 632.0 L505.6 631.6 L510.0 631.2 L514.5 630.7 L519.0 630.2 L523.5 629.6 L528.1 628.9 L532.5 628.2 L536.8 627.6 L540.8 627.0 L544.5 626.4 L548.1 625.7 L551.8 625.0 L555.5 624.3 L559.3 623.4 L563.0 622.5 L566.6 621.7 L570.1 620.8 L573.6 619.9 L576.9 619.0 L580.0 618.1 L582.8 617.2 L585.4 616.4 L587.9 615.5 L590.2 614.7 L592.4 613.7 L594.5 612.8 L596.3 611.9 L597.5 611.4 M355.8 612.7 L356.9 615.7 L358.3 620.1 L360.0 624.7 L361.5 628.3 L362.9 630.4 L364.3 631.7 L365.7 632.7 L367.2 633.7 L368.7 634.9 L370.4 636.0 L372.1 637.1 L373.8 638.1 L375.5 639.0 L377.3 639.9 L379.1 640.7 L381.0 641.6 L383.1 642.4 L385.3 643.3 L387.5 644.2 L389.8 645.0 L391.9 645.7 L394.0 646.4 L396.2 647.1 L398.4 647.8 L400.7 648.4 L403.0 649.0 L405.4 649.6 L408.0 650.2 L410.7 650.8 L413.6 651.4 L416.6 652.0 L419.7 652.5 L422.9 653.1 L426.2 653.6 L429.7 654.0 L433.3 654.5 L437.2 655.0 L441.3 655.5 L445.5 655.9 L449.8 656.3 L454.2 656.6 L458.7 656.9 L463.2 657.1 L467.7 657.3 L472.1 657.4 L476.4 657.4 L480.7 657.4 L485.0 657.3 L489.2 657.3 L493.3 657.1 L497.5 656.9 L501.7 656.7 L506.0 656.3 L510.3 655.9 L514.7 655.5 L519.1 655.0 L523.5 654.4 L527.9 653.8 L532.3 653.2 L536.5 652.5 L540.4 651.9 L544.1 651.4 L547.7 650.7 L551.3 650.1 L555.0 649.3 L558.8 648.5 L562.4 647.7 L566.0 646.9 L569.5 646.1 L573.0 645.2 L576.3 644.4 L579.4 643.6 L582.3 642.7 L585.0 641.9 L587.5 641.1 L589.9 640.3 L592.2 639.4 L594.4 638.5 L596.2 637.7 L597.5 637.1 M359.3 637.7 L360.4 640.9 L361.9 645.5 L363.7 650.3 L365.3 654.0 L366.8 656.1 L368.2 657.4 L369.6 658.2 L371.1 659.2 L372.7 660.4 L374.4 661.4 L376.1 662.4 L377.8 663.4 L379.5 664.3 L381.2 665.1 L382.9 665.9 L384.8 666.7 L386.8 667.5 L389.0 668.4 L391.2 669.2 L393.4 670.0 L395.5 670.7 L397.6 671.3 L399.7 672.0 L401.8 672.6 L404.1 673.2 L406.3 673.8 L408.7 674.4 L411.2 674.9 L413.9 675.5 L416.6 676.1 L419.5 676.7 L422.5 677.2 L425.6 677.7 L428.8 678.2 L432.1 678.6 L435.7 679.1 L439.4 679.6 L443.4 680.0 L447.5 680.5 L451.6 680.9 L455.9 681.2 L460.3 681.5 L464.7 681.7 L469.1 681.8 L473.4 681.9 L477.6 682.0 L481.8 682.0 L486.0 681.9 L490.1 681.9 L494.1 681.7 L498.1 681.6 L502.1 681.3 L506.3 681.0 L510.6 680.6 L514.9 680.2 L519.2 679.7 L523.5 679.2 L527.8 678.7 L532.1 678.1 L536.2 677.5 L540.0 676.9 L543.7 676.3 L547.3 675.8 L550.9 675.1 L554.5 674.4 L558.2 673.7 L561.8 672.9 L565.4 672.1 L568.9 671.3 L572.4 670.5 L575.7 669.8 L578.8 669.0 L581.8 668.2 L584.6 667.5 L587.2 666.7 L589.6 665.9 L592.0 665.1 L594.3 664.2 L596.2 663.4 L597.5 662.9 M362.7 662.8 L363.9 666.1 L365.5 670.9 L367.4 675.9 L369.1 679.7 L370.6 681.8 L372.1 683.0 L373.6 683.8 L375.1 684.7 L376.7 685.8 L378.4 686.8 L380.1 687.8 L381.8 688.7 L383.4 689.5 L385.1 690.3 L386.8 691.0 L388.6 691.8 L390.6 692.6 L392.7 693.4 L394.9 694.2 L397.1 694.9 L399.1 695.6 L401.1 696.3 L403.2 696.9 L405.3 697.5 L407.5 698.1 L409.7 698.6 L412.0 699.2 L414.4 699.7 L417.0 700.3 L419.7 700.8 L422.5 701.3 L425.4 701.8 L428.4 702.3 L431.4 702.8 L434.6 703.2 L438.0 703.7 L441.6 704.1 L445.5 704.6 L449.4 705.0 L453.5 705.4 L457.6 705.7 L461.9 706.0 L466.2 706.2 L470.5 706.4 L474.7 706.5 L478.8 706.6 L483.0 706.6 L487.0 706.5 L490.9 706.5 L494.8 706.4 L498.6 706.2 L502.6 706.0 L506.7 705.7 L510.9 705.4 L515.1 705.0 L519.3 704.5 L523.5 704.1 L527.7 703.5 L531.9 703.0 L535.9 702.4 L539.7 701.9 L543.3 701.3 L546.8 700.8 L550.4 700.2 L554.0 699.5 L557.7 698.8 L561.3 698.0 L564.8 697.3 L568.3 696.6 L571.7 695.9 L575.1 695.2 L578.3 694.4 L581.3 693.7 L584.2 693.0 L586.9 692.3 L589.4 691.6 L591.8 690.8 L594.1 689.9 L596.1 689.2 L597.5 688.7 M366.1 687.9 L367.4 691.3 L369.1 696.3 L371.1 701.5 L372.9 705.4 L374.5 707.5 L376.0 708.7 L377.5 709.4 L379.1 710.2 L380.7 711.3 L382.4 712.2 L384.1 713.1 L385.7 714.0 L387.4 714.7 L389.0 715.5 L390.6 716.2 L392.4 716.9 L394.4 717.6 L396.5 718.4 L398.6 719.2 L400.7 719.9 L402.7 720.6 L404.7 721.2 L406.7 721.8 L408.7 722.3 L410.8 722.9 L413.0 723.4 L415.2 723.9 L417.6 724.5 L420.1 725.0 L422.7 725.5 L425.5 726.0 L428.3 726.5 L431.1 726.9 L434.0 727.4 L437.1 727.8 L440.3 728.2 L443.8 728.7 L447.5 729.1 L451.4 729.6 L455.3 730.0 L459.4 730.3 L463.5 730.6 L467.8 730.8 L471.9 731.0 L476.0 731.1 L480.0 731.1 L484.1 731.1 L488.0 731.1 L491.8 731.1 L495.5 731.0 L499.2 730.9 L503.1 730.7 L507.1 730.4 L511.2 730.1 L515.3 729.7 L519.4 729.3 L523.5 728.9 L527.6 728.4 L531.7 727.9 L535.6 727.4 L539.3 726.8 L542.9 726.3 L546.4 725.8 L549.9 725.2 L553.5 724.6 L557.1 723.9 L560.7 723.2 L564.2 722.5 L567.7 721.9 L571.1 721.2 L574.5 720.5 L577.7 719.9 L580.8 719.2 L583.7 718.5 L586.5 717.9 L589.1 717.2 L591.6 716.4 L594.0 715.7 L596.1 714.9 L597.5 714.5 M369.6 712.9 L370.9 716.5 L372.7 721.7 L374.8 727.1 L376.7 731.1 L378.3 733.2 L379.9 734.3 L381.4 735.0 L383.0 735.7 L384.7 736.7 L386.4 737.6 L388.1 738.5 L389.7 739.2 L391.3 740.0 L392.9 740.7 L394.5 741.3 L396.2 742.0 L398.1 742.7 L400.2 743.5 L402.3 744.2 L404.4 744.9 L406.3 745.5 L408.2 746.1 L410.2 746.7 L412.2 747.2 L414.2 747.7 L416.3 748.2 L418.5 748.7 L420.8 749.2 L423.2 749.7 L425.8 750.2 L428.4 750.7 L431.1 751.1 L433.9 751.6 L436.6 752.0 L439.5 752.4 L442.7 752.8 L446.0 753.2 L449.6 753.7 L453.4 754.1 L457.2 754.5 L461.1 754.9 L465.2 755.1 L469.3 755.4 L473.3 755.5 L477.3 755.7 L481.3 755.7 L485.2 755.7 L489.0 755.7 L492.7 755.7 L496.3 755.6 L499.8 755.5 L503.5 755.3 L507.4 755.1 L511.4 754.8 L515.5 754.5 L519.5 754.1 L523.5 753.7 L527.5 753.3 L531.5 752.8 L535.3 752.3 L539.0 751.8 L542.5 751.3 L546.0 750.8 L549.5 750.2 L553.0 749.6 L556.6 749.0 L560.1 748.4 L563.6 747.7 L567.1 747.1 L570.5 746.5 L573.9 745.9 L577.2 745.3 L580.3 744.7 L583.3 744.1 L586.2 743.5 L588.9 742.8 L591.4 742.1 L593.9 741.4 L596.0 740.7 L597.5 740.2" fill="none" stroke="#0c0c0c" stroke-width="1.500"/>
<path d="M719.0 436.0 L719.1 436.8 L719.2 437.9 L719.3 439.2 L719.4 440.6 L719.3 442.0 L719.1 443.3 L718.9 444.6 L718.6 446.0 L718.1 447.5 L717.4 449.0 L716.4 450.7 L715.2 452.4 L713.8 454.3 L712.3 456.1 L710.7 457.8 L709.0 459.5 L707.1 461.3 L705.1 462.9 L703.1 464.5 L701.0 465.8 L698.9 466.8 L696.6 467.6 L694.4 468.2 L692.2 468.8 L690.0 469.5 L687.9 470.3 L685.8 471.0 L683.7 471.8 L681.8 472.6 L680.0 473.5 L678.4 474.5 L676.8 475.6 L675.4 476.7 L674.1 477.8 L673.0 479.0 L672.0 480.3 L671.2 481.7 L670.5 483.0 L670.0 484.2 L669.6 485.0 L672.0 560.0 L716.0 520.0Z" fill="#f1f1f1" opacity=".6"/>
<path d="M716.0 450.0L713.0 520.0 M709.0 460.0L706.0 524.0 M700.0 467.0L697.0 525.0 M690.0 473.0L687.0 525.0 M681.0 478.0L678.0 522.0 M718.0 458.0 L718.1 458.8 L718.2 459.9 L718.3 461.2 L718.4 462.6 L718.3 464.0 L718.1 465.3 L717.9 466.6 L717.6 468.0 L717.1 469.5 L716.4 471.0 L715.4 472.7 L714.2 474.4 L712.8 476.3 L711.3 478.1 L709.7 479.8 L708.0 481.5 L706.1 483.3 L704.1 484.9 L702.1 486.5 L700.0 487.8 L697.9 488.8 L695.6 489.6 L693.4 490.2 L691.2 490.8 L689.0 491.5 L686.9 492.3 L684.8 493.0 L682.7 493.8 L680.8 494.6 L679.0 495.5 L677.4 496.5 L675.8 497.6 M718.0 480.0 L718.1 480.8 L718.2 481.9 L718.3 483.2 L718.4 484.6 L718.3 486.0 L718.1 487.3 L717.9 488.6 L717.6 490.0 L717.1 491.5 L716.4 493.0 L715.4 494.7 L714.2 496.4 L712.8 498.3 L711.3 500.1 L709.7 501.8 L708.0 503.5 L706.1 505.3 L704.1 506.9 L702.1 508.5 L700.0 509.8 L697.9 510.8 L695.6 511.6 L693.4 512.2 L691.2 512.8 L689.0 513.5 L686.9 514.3 L684.8 515.0 L682.7 515.8 L680.8 516.6 L679.0 517.5 L677.4 518.5 L675.8 519.6 M683 480L714 498M683 500L716 475" fill="none" stroke="#8f8f8f" stroke-width="1.300"/>
<path d="M669.6 487.0 L670.1 488.3 L670.8 490.1 L671.6 492.2 L672.5 494.4 L673.5 496.4 L674.5 497.9 L675.5 499.0 L676.5 499.8 L677.6 500.4 L678.8 500.9 L680.1 501.4 L681.5 502.0 L683.1 502.7 L684.7 503.3 L686.5 504.0 L688.4 504.6 L690.5 505.3 L692.6 505.9 L694.9 506.6 L697.3 507.3 L699.8 508.0 L702.4 508.7 L705.2 509.4 L708.0 510.0 L711.0 510.6 L714.2 511.2 L717.4 511.8 L720.8 512.4 L724.1 512.9 L727.4 513.3 L730.7 513.7 L733.9 514.0 L737.2 514.3 L740.4 514.5 L743.7 514.7 L747.0 514.8 L750.3 514.8 L753.5 514.7 L756.8 514.6 L760.1 514.4 L763.4 514.2 L766.8 514.0 L770.2 513.7 L773.8 513.4 L777.3 513.1 L780.9 512.7 L784.3 512.4 L787.6 512.0 L790.7 511.6 L793.6 511.3 L796.5 510.9 L799.3 510.6 L802.1 510.2 L805.0 509.8 L808.1 509.4 L811.5 508.9 L814.9 508.4 L818.1 508.0 L820.8 507.6 L822.7 507.3 L786.5 812.0 L785.2 812.3 L783.4 812.7 L781.2 813.2 L778.9 813.8 L776.4 814.3 L774.0 814.8 L771.6 815.3 L769.1 815.7 L766.5 816.2 L763.9 816.6 L761.2 817.1 L758.5 817.4 L755.8 817.8 L753.1 818.1 L750.4 818.5 L747.6 818.7 L744.8 819.0 L742.0 819.2 L739.1 819.3 L736.2 819.4 L733.2 819.5 L730.3 819.6 L727.4 819.5 L724.6 819.5 L721.9 819.4 L719.2 819.2 L716.6 819.0 L714.0 818.8 L711.5 818.5 L709.0 818.2 L706.6 817.9 L704.1 817.6 L701.8 817.3 L699.5 816.9 L697.2 816.5 L695.0 816.1 L692.8 815.7 L690.7 815.2 L688.7 814.8 L686.7 814.3 L684.8 813.8 L683.0 813.4 L681.3 812.9 L679.7 812.4 L678.1 812.0 L676.7 811.5 L675.3 811.0 L674.0 810.5 L672.8 810.1 L671.7 809.7 L670.7 809.3 L669.7 808.8 L668.6 808.0 L667.6 807.0 L666.4 805.5 L665.2 803.5 L663.9 801.3 L662.7 799.1 L661.7 797.3 L661.0 796.0Z" fill="#fff"/>
<clipPath id="s3c"><path d="M669.6 487.0 L670.1 488.3 L670.8 490.1 L671.6 492.2 L672.5 494.4 L673.5 496.4 L674.5 497.9 L675.5 499.0 L676.5 499.8 L677.6 500.4 L678.8 500.9 L680.1 501.4 L681.5 502.0 L683.1 502.7 L684.7 503.3 L686.5 504.0 L688.4 504.6 L690.5 505.3 L692.6 505.9 L694.9 506.6 L697.3 507.3 L699.8 508.0 L702.4 508.7 L705.2 509.4 L708.0 510.0 L711.0 510.6 L714.2 511.2 L717.4 511.8 L720.8 512.4 L724.1 512.9 L727.4 513.3 L730.7 513.7 L733.9 514.0 L737.2 514.3 L740.4 514.5 L743.7 514.7 L747.0 514.8 L750.3 514.8 L753.5 514.7 L756.8 514.6 L760.1 514.4 L763.4 514.2 L766.8 514.0 L770.2 513.7 L773.8 513.4 L777.3 513.1 L780.9 512.7 L784.3 512.4 L787.6 512.0 L790.7 511.6 L793.6 511.3 L796.5 510.9 L799.3 510.6 L802.1 510.2 L805.0 509.8 L808.1 509.4 L811.5 508.9 L814.9 508.4 L818.1 508.0 L820.8 507.6 L822.7 507.3 L786.5 812.0 L785.2 812.3 L783.4 812.7 L781.2 813.2 L778.9 813.8 L776.4 814.3 L774.0 814.8 L771.6 815.3 L769.1 815.7 L766.5 816.2 L763.9 816.6 L761.2 817.1 L758.5 817.4 L755.8 817.8 L753.1 818.1 L750.4 818.5 L747.6 818.7 L744.8 819.0 L742.0 819.2 L739.1 819.3 L736.2 819.4 L733.2 819.5 L730.3 819.6 L727.4 819.5 L724.6 819.5 L721.9 819.4 L719.2 819.2 L716.6 819.0 L714.0 818.8 L711.5 818.5 L709.0 818.2 L706.6 817.9 L704.1 817.6 L701.8 817.3 L699.5 816.9 L697.2 816.5 L695.0 816.1 L692.8 815.7 L690.7 815.2 L688.7 814.8 L686.7 814.3 L684.8 813.8 L683.0 813.4 L681.3 812.9 L679.7 812.4 L678.1 812.0 L676.7 811.5 L675.3 811.0 L674.0 810.5 L672.8 810.1 L671.7 809.7 L670.7 809.3 L669.7 808.8 L668.6 808.0 L667.6 807.0 L666.4 805.5 L665.2 803.5 L663.9 801.3 L662.7 799.1 L661.7 797.3 L661.0 796.0Z"/></clipPath>
<path d="M391.300 325V712 M391.300 657L470 655 M470 293V655 M640 325V656 M470 655L381.600 727.600 M470 655L640 656L917.500 786" fill="none" stroke="#7c92dc" stroke-width="2.600" clip-path="url(#s3c)"/>
<path d="M668.4 529.6 L669.2 531.7 L670.5 534.8 L672.0 538.1 L673.5 540.6 L675.0 542.1 L676.6 543.0 L678.4 543.7 L680.4 544.5 L682.8 545.5 L685.3 546.4 L688.1 547.4 L691.2 548.3 L694.6 549.3 L698.2 550.3 L702.0 551.3 L706.1 552.2 L710.5 553.1 L715.2 553.9 L720.0 554.7 L724.8 555.3 L729.5 555.9 L734.2 556.3 L739.0 556.6 L743.8 556.8 L748.6 556.8 L753.4 556.6 L758.3 556.4 L763.2 556.1 L768.3 555.7 L773.5 555.2 L778.6 554.6 L783.4 554.1 L787.9 553.6 L792.2 553.0 L796.4 552.4 L800.6 551.8 L805.2 551.2 L810.1 550.4 L814.5 549.8 L817.5 549.3 M668.4 533.0 L669.2 535.1 L670.5 538.2 L672.0 541.5 L673.5 544.0 L675.0 545.5 L676.6 546.4 L678.4 547.1 L680.4 547.9 L682.8 548.9 L685.3 549.8 L688.1 550.8 L691.2 551.7 L694.6 552.7 L698.2 553.7 L702.0 554.7 L706.1 555.6 L710.5 556.5 L715.2 557.3 L720.0 558.1 L724.8 558.7 L729.5 559.3 L734.2 559.7 L739.0 560.0 L743.8 560.2 L748.6 560.2 L753.4 560.0 L758.3 559.8 L763.2 559.5 L768.3 559.1 L773.5 558.6 L778.6 558.0 L783.4 557.5 L787.9 557.0 L792.2 556.4 L796.4 555.8 L800.6 555.2 L805.2 554.6 L810.1 553.8 L814.5 553.2 L817.5 552.7 M667.2 573.2 L668.1 575.4 L669.4 578.5 L671.0 581.7 L672.5 584.2 L674.1 585.7 L675.6 586.6 L677.4 587.3 L679.4 588.1 L681.6 589.0 L684.1 589.9 L686.9 590.8 L689.9 591.7 L693.1 592.6 L696.6 593.6 L700.4 594.5 L704.3 595.4 L708.5 596.2 L713.0 597.0 L717.6 597.8 L722.2 598.4 L726.7 598.9 L731.3 599.3 L736.0 599.6 L740.6 599.8 L745.3 599.8 L750.1 599.7 L754.9 599.4 L759.7 599.1 L764.7 598.8 L769.7 598.3 L774.6 597.8 L779.3 597.2 L783.7 596.7 L788.0 596.1 L792.1 595.5 L796.2 594.9 L800.7 594.2 L805.3 593.4 L809.5 592.8 L812.4 592.3 M667.2 576.6 L668.1 578.8 L669.4 581.9 L671.0 585.1 L672.5 587.6 L674.1 589.1 L675.6 590.0 L677.4 590.7 L679.4 591.5 L681.6 592.4 L684.1 593.3 L686.9 594.2 L689.9 595.1 L693.1 596.0 L696.6 597.0 L700.4 597.9 L704.3 598.8 L708.5 599.6 L713.0 600.4 L717.6 601.2 L722.2 601.8 L726.7 602.3 L731.3 602.7 L736.0 603.0 L740.6 603.2 L745.3 603.2 L750.1 603.1 L754.9 602.8 L759.7 602.5 L764.7 602.2 L769.7 601.7 L774.6 601.2 L779.3 600.6 L783.7 600.1 L788.0 599.5 L792.1 598.9 L796.2 598.3 L800.7 597.6 L805.3 596.8 L809.5 596.2 L812.4 595.7 M665.9 616.8 L666.9 619.0 L668.3 622.1 L669.9 625.3 L671.6 627.8 L673.1 629.3 L674.6 630.2 L676.4 630.9 L678.3 631.6 L680.5 632.5 L683.0 633.4 L685.6 634.2 L688.5 635.1 L691.7 636.0 L695.1 636.9 L698.7 637.8 L702.5 638.6 L706.5 639.4 L710.8 640.1 L715.2 640.8 L719.6 641.4 L724.0 641.9 L728.4 642.3 L732.9 642.6 L737.5 642.8 L742.1 642.8 L746.8 642.7 L751.5 642.5 L756.2 642.2 L761.0 641.8 L765.9 641.4 L770.6 640.9 L775.2 640.3 L779.6 639.8 L783.7 639.2 L787.8 638.6 L791.8 637.9 L796.1 637.2 L800.6 636.5 L804.5 635.8 L807.3 635.3 M665.9 620.2 L666.9 622.4 L668.3 625.5 L669.9 628.7 L671.6 631.2 L673.1 632.7 L674.6 633.6 L676.4 634.3 L678.3 635.0 L680.5 635.9 L683.0 636.8 L685.6 637.6 L688.5 638.5 L691.7 639.4 L695.1 640.3 L698.7 641.2 L702.5 642.0 L706.5 642.8 L710.8 643.5 L715.2 644.2 L719.6 644.8 L724.0 645.3 L728.4 645.7 L732.9 646.0 L737.5 646.2 L742.1 646.2 L746.8 646.1 L751.5 645.9 L756.2 645.6 L761.0 645.2 L765.9 644.8 L770.6 644.3 L775.2 643.7 L779.6 643.2 L783.7 642.6 L787.8 642.0 L791.8 641.3 L796.1 640.6 L800.6 639.9 L804.5 639.2 L807.3 638.7 M664.7 660.4 L665.8 662.6 L667.2 665.7 L668.9 668.9 L670.6 671.4 L672.1 672.9 L673.7 673.8 L675.3 674.4 L677.2 675.2 L679.4 676.0 L681.8 676.8 L684.4 677.7 L687.2 678.5 L690.2 679.3 L693.5 680.2 L697.0 681.0 L700.6 681.8 L704.5 682.5 L708.6 683.2 L712.7 683.9 L717.0 684.4 L721.2 684.9 L725.5 685.3 L729.9 685.6 L734.3 685.8 L738.8 685.8 L743.5 685.7 L748.1 685.5 L752.7 685.3 L757.4 684.9 L762.1 684.5 L766.7 684.0 L771.1 683.4 L775.4 682.9 L779.5 682.2 L783.5 681.6 L787.4 681.0 L791.6 680.3 L795.8 679.5 L799.6 678.8 L802.2 678.3 M664.7 663.8 L665.8 666.0 L667.2 669.1 L668.9 672.3 L670.6 674.8 L672.1 676.3 L673.7 677.2 L675.3 677.8 L677.2 678.6 L679.4 679.4 L681.8 680.2 L684.4 681.1 L687.2 681.9 L690.2 682.7 L693.5 683.6 L697.0 684.4 L700.6 685.2 L704.5 685.9 L708.6 686.6 L712.7 687.3 L717.0 687.8 L721.2 688.3 L725.5 688.7 L729.9 689.0 L734.3 689.2 L738.8 689.2 L743.5 689.1 L748.1 688.9 L752.7 688.7 L757.4 688.3 L762.1 687.9 L766.7 687.4 L771.1 686.8 L775.4 686.3 L779.5 685.6 L783.5 685.0 L787.4 684.4 L791.6 683.7 L795.8 682.9 L799.6 682.2 L802.2 681.7 M663.5 704.0 L664.6 706.2 L666.2 709.3 L667.9 712.5 L669.6 715.0 L671.2 716.5 L672.7 717.4 L674.3 718.0 L676.2 718.7 L678.3 719.5 L680.6 720.3 L683.1 721.1 L685.8 721.9 L688.8 722.7 L691.9 723.5 L695.3 724.3 L698.8 725.0 L702.5 725.7 L706.3 726.3 L710.3 726.9 L714.4 727.5 L718.5 727.9 L722.6 728.3 L726.8 728.6 L731.1 728.8 L735.6 728.8 L740.1 728.8 L744.7 728.6 L749.2 728.3 L753.7 728.0 L758.2 727.6 L762.7 727.1 L767.0 726.5 L771.2 726.0 L775.3 725.3 L779.2 724.7 L783.1 724.0 L787.0 723.3 L791.1 722.5 L794.6 721.8 L797.1 721.3 M663.5 707.4 L664.6 709.6 L666.2 712.7 L667.9 715.9 L669.6 718.4 L671.2 719.9 L672.7 720.8 L674.3 721.4 L676.2 722.1 L678.3 722.9 L680.6 723.7 L683.1 724.5 L685.8 725.3 L688.8 726.1 L691.9 726.9 L695.3 727.7 L698.8 728.4 L702.5 729.1 L706.3 729.7 L710.3 730.3 L714.4 730.9 L718.5 731.3 L722.6 731.7 L726.8 732.0 L731.1 732.2 L735.6 732.2 L740.1 732.2 L744.7 732.0 L749.2 731.7 L753.7 731.4 L758.2 731.0 L762.7 730.5 L767.0 729.9 L771.2 729.4 L775.3 728.7 L779.2 728.1 L783.1 727.4 L787.0 726.7 L791.1 725.9 L794.6 725.2 L797.1 724.7 M662.3 747.7 L663.4 749.8 L665.1 752.9 L666.9 756.2 L668.6 758.7 L670.2 760.1 L671.7 761.0 L673.3 761.6 L675.1 762.2 L677.2 763.0 L679.4 763.8 L681.8 764.5 L684.4 765.2 L687.3 766.0 L690.4 766.8 L693.6 767.5 L697.0 768.2 L700.5 768.8 L704.1 769.5 L707.9 770.0 L711.8 770.5 L715.7 770.9 L719.7 771.3 L723.8 771.6 L728.0 771.8 L732.3 771.8 L736.8 771.8 L741.3 771.6 L745.7 771.4 L750.1 771.1 L754.4 770.7 L758.7 770.2 L762.9 769.6 L767.0 769.0 L771.0 768.4 L774.9 767.7 L778.7 767.1 L782.5 766.3 L786.3 765.5 L789.6 764.8 L792.0 764.3 M662.3 751.1 L663.4 753.2 L665.1 756.3 L666.9 759.6 L668.6 762.1 L670.2 763.5 L671.7 764.4 L673.3 765.0 L675.1 765.6 L677.2 766.4 L679.4 767.2 L681.8 767.9 L684.4 768.6 L687.3 769.4 L690.4 770.2 L693.6 770.9 L697.0 771.6 L700.5 772.2 L704.1 772.9 L707.9 773.4 L711.8 773.9 L715.7 774.3 L719.7 774.7 L723.8 775.0 L728.0 775.2 L732.3 775.2 L736.8 775.2 L741.3 775.0 L745.7 774.8 L750.1 774.5 L754.4 774.1 L758.7 773.6 L762.9 773.0 L767.0 772.4 L771.0 771.8 L774.9 771.1 L778.7 770.5 L782.5 769.7 L786.3 768.9 L789.6 768.2 L792.0 767.7" fill="none" stroke="#707070" stroke-width="1.300"/>
<path d="M669.6 487.0L661.0 796.0 M674.5 497.9L667.6 807.0 M681.5 502.0L674.0 810.5 M692.6 505.9L683.0 813.4 M708.0 510.0L695.0 816.1 M727.4 513.3L709.0 818.2 M747.0 514.8L724.6 819.5 M766.8 514.0L742.0 819.2 M787.6 512.0L758.5 817.4 M805.0 509.8L774.0 814.8 M822.7 507.3L786.5 812.0" fill="none" stroke="#0c0c0c" stroke-width="2.0"/><path d="M669.6 489.0 L670.4 491.1 L671.6 494.2 L673.0 497.4 L674.5 499.9 L676.0 501.4 L677.6 502.4 L679.4 503.2 L681.5 504.0 L683.9 505.0 L686.5 506.0 L689.4 506.9 L692.6 507.9 L696.1 508.9 L699.8 510.0 L703.8 511.1 L708.0 512.0 L712.6 512.9 L717.4 513.8 L722.4 514.6 L727.4 515.3 L732.3 515.9 L737.2 516.3 L742.1 516.6 L747.0 516.8 L751.9 516.8 L756.8 516.6 L761.8 516.3 L766.8 516.0 L772.0 515.6 L777.3 515.1 L782.6 514.5 L787.6 514.0 L792.2 513.5 L796.5 512.9 L800.7 512.4 L805.0 511.8 L809.8 511.1 L814.9 510.4 L819.5 509.8 L822.7 509.3 M668.9 512.8 L669.7 514.9 L671.0 518.0 L672.4 521.2 L673.9 523.7 L675.4 525.2 L677.0 526.1 L678.8 526.9 L680.9 527.7 L683.2 528.7 L685.8 529.6 L688.7 530.6 L691.8 531.5 L695.2 532.5 L698.9 533.6 L702.8 534.6 L706.9 535.5 L711.4 536.4 L716.1 537.3 L721.0 538.1 L725.9 538.7 L730.7 539.3 L735.5 539.7 L740.3 540.0 L745.1 540.2 L750.0 540.2 L754.9 540.0 L759.8 539.8 L764.7 539.4 L769.9 539.0 L775.1 538.5 L780.3 538.0 L785.2 537.5 L789.7 536.9 L794.0 536.4 L798.2 535.8 L802.4 535.2 L807.1 534.5 L812.1 533.8 L816.6 533.2 L819.7 532.7 M668.2 538.5 L669.1 540.6 L670.3 543.7 L671.8 546.9 L673.4 549.5 L674.9 550.9 L676.5 551.9 L678.2 552.6 L680.2 553.4 L682.6 554.4 L685.1 555.3 L687.9 556.2 L691.0 557.2 L694.3 558.1 L697.9 559.1 L701.8 560.1 L705.8 561.0 L710.2 561.9 L714.8 562.7 L719.6 563.5 L724.3 564.1 L729.0 564.7 L733.7 565.1 L738.5 565.4 L743.3 565.6 L748.1 565.6 L752.9 565.4 L757.8 565.2 L762.7 564.9 L767.7 564.5 L772.9 564.0 L777.9 563.4 L782.8 562.9 L787.2 562.4 L791.5 561.8 L795.7 561.2 L799.8 560.6 L804.5 560.0 L809.3 559.2 L813.6 558.5 L816.7 558.1 M667.5 564.2 L668.4 566.4 L669.7 569.5 L671.2 572.7 L672.8 575.2 L674.3 576.7 L675.9 577.6 L677.6 578.3 L679.6 579.1 L681.9 580.1 L684.4 581.0 L687.2 581.9 L690.2 582.8 L693.5 583.7 L697.0 584.7 L700.8 585.7 L704.8 586.5 L709.0 587.4 L713.5 588.2 L718.2 588.9 L722.8 589.5 L727.4 590.1 L732.0 590.5 L736.7 590.8 L741.4 591.0 L746.1 591.0 L750.9 590.8 L755.7 590.6 L760.6 590.3 L765.6 589.9 L770.6 589.4 L775.6 588.9 L780.3 588.4 L784.8 587.8 L789.0 587.2 L793.1 586.7 L797.2 586.0 L801.8 585.4 L806.5 584.6 L810.7 583.9 L813.7 583.5 M666.7 590.0 L667.7 592.1 L669.0 595.2 L670.6 598.5 L672.2 601.0 L673.7 602.4 L675.3 603.4 L677.0 604.1 L679.0 604.8 L681.3 605.8 L683.7 606.6 L686.4 607.5 L689.4 608.4 L692.6 609.3 L696.1 610.3 L699.8 611.2 L703.7 612.1 L707.8 612.9 L712.2 613.6 L716.7 614.3 L721.3 614.9 L725.8 615.4 L730.3 615.9 L734.9 616.2 L739.5 616.4 L744.2 616.4 L749.0 616.3 L753.7 616.0 L758.5 615.7 L763.4 615.3 L768.4 614.9 L773.2 614.4 L777.9 613.8 L782.3 613.3 L786.5 612.7 L790.6 612.1 L794.7 611.5 L799.1 610.8 L803.7 610.0 L807.8 609.3 L810.6 608.9 M666.0 615.8 L667.0 617.9 L668.4 621.0 L670.0 624.2 L671.6 626.7 L673.2 628.2 L674.7 629.1 L676.4 629.8 L678.4 630.6 L680.6 631.4 L683.0 632.3 L685.7 633.2 L688.6 634.0 L691.8 634.9 L695.2 635.8 L698.8 636.7 L702.6 637.6 L706.6 638.3 L710.9 639.1 L715.3 639.8 L719.7 640.4 L724.1 640.8 L728.6 641.3 L733.1 641.6 L737.7 641.8 L742.3 641.8 L747.0 641.7 L751.7 641.4 L756.5 641.2 L761.3 640.8 L766.1 640.3 L770.9 639.8 L775.5 639.3 L779.8 638.7 L784.0 638.1 L788.1 637.5 L792.1 636.9 L796.4 636.2 L800.9 635.4 L804.9 634.7 L807.6 634.3 M665.3 641.5 L666.3 643.6 L667.8 646.8 L669.4 650.0 L671.0 652.5 L672.6 653.9 L674.1 654.8 L675.8 655.5 L677.8 656.3 L679.9 657.1 L682.3 658.0 L685.0 658.8 L687.8 659.6 L690.9 660.5 L694.2 661.4 L697.8 662.3 L701.5 663.1 L705.4 663.8 L709.6 664.5 L713.9 665.2 L718.2 665.8 L722.5 666.2 L726.9 666.7 L731.3 667.0 L735.8 667.1 L740.4 667.2 L745.0 667.1 L749.7 666.9 L754.4 666.6 L759.1 666.2 L763.9 665.8 L768.5 665.3 L773.0 664.7 L777.3 664.2 L781.5 663.6 L785.5 662.9 L789.5 662.3 L793.7 661.6 L798.1 660.8 L801.9 660.1 L804.6 659.6 M664.6 667.2 L665.6 669.4 L667.1 672.5 L668.8 675.7 L670.5 678.2 L672.0 679.7 L673.6 680.6 L675.2 681.2 L677.1 682.0 L679.3 682.8 L681.6 683.6 L684.2 684.4 L687.0 685.3 L690.0 686.1 L693.3 687.0 L696.8 687.8 L700.4 688.6 L704.3 689.3 L708.3 690.0 L712.5 690.6 L716.7 691.2 L720.9 691.6 L725.2 692.0 L729.5 692.4 L733.9 692.5 L738.5 692.6 L743.1 692.5 L747.7 692.3 L752.3 692.0 L757.0 691.7 L761.6 691.2 L766.2 690.7 L770.6 690.2 L774.9 689.6 L779.0 689.0 L783.0 688.4 L786.9 687.7 L791.0 687.0 L795.3 686.2 L799.0 685.5 L801.6 685.0 M663.9 693.0 L664.9 695.1 L666.5 698.3 L668.2 701.5 L669.9 704.0 L671.4 705.4 L673.0 706.3 L674.6 707.0 L676.5 707.7 L678.6 708.5 L680.9 709.3 L683.5 710.1 L686.2 710.9 L689.2 711.7 L692.4 712.5 L695.8 713.3 L699.3 714.1 L703.1 714.8 L707.0 715.5 L711.0 716.1 L715.1 716.6 L719.3 717.0 L723.4 717.4 L727.7 717.7 L732.1 717.9 L736.5 718.0 L741.1 717.9 L745.7 717.7 L750.3 717.5 L754.8 717.1 L759.4 716.7 L763.8 716.2 L768.2 715.6 L772.4 715.1 L776.5 714.4 L780.5 713.8 L784.3 713.1 L788.4 712.4 L792.5 711.6 L796.1 710.9 L798.6 710.4 M663.1 718.8 L664.3 720.9 L665.8 724.0 L667.6 727.3 L669.3 729.7 L670.9 731.2 L672.4 732.1 L674.0 732.7 L675.9 733.4 L678.0 734.2 L680.2 735.0 L682.7 735.7 L685.4 736.5 L688.3 737.3 L691.5 738.1 L694.8 738.9 L698.2 739.6 L701.9 740.3 L705.7 740.9 L709.6 741.5 L713.6 742.0 L717.6 742.4 L721.7 742.8 L725.9 743.1 L730.2 743.3 L734.6 743.4 L739.1 743.3 L743.7 743.1 L748.2 742.9 L752.7 742.5 L757.1 742.1 L761.5 741.6 L765.8 741.1 L769.9 740.5 L774.0 739.9 L777.9 739.2 L781.8 738.5 L785.7 737.8 L789.6 737.0 L793.1 736.3 L795.5 735.8 M662.4 744.5 L663.6 746.7 L665.2 749.8 L667.0 753.0 L668.8 755.5 L670.3 756.9 L671.8 757.8 L673.4 758.4 L675.2 759.1 L677.3 759.9 L679.5 760.6 L682.0 761.4 L684.6 762.1 L687.5 762.9 L690.5 763.6 L693.8 764.4 L697.2 765.1 L700.7 765.7 L704.4 766.4 L708.2 766.9 L712.1 767.4 L716.0 767.8 L720.0 768.2 L724.1 768.5 L728.3 768.7 L732.7 768.8 L737.2 768.7 L741.7 768.6 L746.1 768.3 L750.5 768.0 L754.9 767.6 L759.2 767.1 L763.4 766.5 L767.5 766.0 L771.5 765.3 L775.4 764.6 L779.2 764.0 L783.0 763.2 L786.8 762.4 L790.2 761.7 L792.5 761.2 M661.7 770.2 L662.9 772.4 L664.5 775.5 L666.4 778.8 L668.2 781.3 L669.7 782.7 L671.2 783.5 L672.8 784.1 L674.6 784.8 L676.7 785.6 L678.8 786.3 L681.2 787.0 L683.8 787.7 L686.6 788.5 L689.6 789.2 L692.8 789.9 L696.1 790.6 L699.5 791.2 L703.1 791.8 L706.8 792.3 L710.5 792.8 L714.4 793.2 L718.3 793.6 L722.3 793.9 L726.5 794.1 L730.8 794.2 L735.2 794.1 L739.7 794.0 L744.1 793.8 L748.4 793.4 L752.6 793.0 L756.8 792.5 L760.9 792.0 L765.0 791.4 L769.0 790.8 L772.9 790.1 L776.6 789.4 L780.3 788.6 L784.0 787.8 L787.3 787.1 L789.5 786.6" fill="none" stroke="#0c0c0c" stroke-width="1.500"/>
<path d="M699.500 467L685.500 772" fill="none" stroke="#7c92dc" stroke-width="1.800"/>
<path d="M663 800Q684 795 687 782Q688 775 682 772" fill="none" stroke="#1f3c8f" stroke-width="1.500"/>
<path d="M321.0 362.0 L321.1 361.3 L321.2 360.4 L321.4 359.2 L321.6 358.1 L321.8 357.0 L322.0 356.0 L322.2 355.2 L322.4 354.6 L322.7 354.0 L323.0 353.4 L323.4 352.7 L324.0 352.0 L324.7 351.2 L325.6 350.3 L326.5 349.4 L327.6 348.4 L328.7 347.5 L330.0 346.5 L331.4 345.5 L333.0 344.5 L334.8 343.5 L336.5 342.5 L338.3 341.5 L340.0 340.6 L341.7 339.7 L343.3 338.9 L345.0 338.2 L346.6 337.4 L348.3 336.7 L350.0 336.0 L351.7 335.4 L353.3 334.8 L355.0 334.2 L356.8 333.7 L358.6 333.1 L360.6 332.5 L362.8 331.9 L365.0 331.2 L367.4 330.5 L369.9 329.8 L372.4 329.1 L375.0 328.5 L377.9 327.8 L381.1 327.2 L384.4 326.5 L387.5 325.9 L390.1 325.4 L392.0 325.0 M321.0 362.0 L321.2 362.9 L321.4 364.1 L321.8 365.5 L322.1 367.0 L322.5 368.6 L323.0 370.0 L323.5 371.4 L324.1 372.7 L324.8 374.1 L325.4 375.4 L326.2 376.8 L327.0 378.0 L327.9 379.2 L328.8 380.3 L329.8 381.4 L330.8 382.5 L331.9 383.5 L333.0 384.5 L334.2 385.4 L335.5 386.3 L336.8 387.1 L338.1 387.9 L339.6 388.7 L341.0 389.5 L342.5 390.3 L344.0 391.1 L345.6 391.8 L347.2 392.6 L348.9 393.3 L350.5 394.0 L352.1 394.7 L353.8 395.4 L355.4 396.1 L357.1 396.7 L358.8 397.4 L360.6 398.0 L362.3 398.6 L364.0 399.2 L365.7 399.7 L367.6 400.3 L369.6 400.9 L372.0 401.5 L374.6 402.2 L377.4 402.9 L380.3 403.7 L383.6 404.5 L387.1 405.3 L391.0 406.0 L395.3 406.7 L400.1 407.5 L405.2 408.2 L410.4 408.9 L415.8 409.5 L421.0 410.0 L426.4 410.4 L432.1 410.8 L437.8 411.1 L443.4 411.3 L448.5 411.5 L453.0 411.6 L456.5 411.7 L459.2 411.8 L461.5 411.8 L463.8 411.8 L466.5 411.7 L470.0 411.6 L474.4 411.4 L479.3 411.2 L484.7 411.0 L490.3 410.6 L496.1 410.1 L502.0 409.5 L508.2 408.6 L514.9 407.6 L521.8 406.4 L528.4 405.2 L534.6 404.0 L540.0 403.0 L544.4 402.2 L548.0 401.5 L551.1 400.8 L554.0 400.2 L556.9 399.5 L560.0 398.6 L563.4 397.6 L567.0 396.4 L570.6 395.2 L574.0 394.0 L577.2 392.7 L580.0 391.6 L582.3 390.5 L584.3 389.5 L586.1 388.5 L587.6 387.5 L589.1 386.5 L590.5 385.5 L592.0 384.4 L593.4 383.2 L594.7 382.1 L595.9 381.0 L596.9 380.1 L597.6 379.4 M597.6 379.4 L598.4 379.5 L599.4 379.6 L600.7 379.7 L602.2 379.9 L603.8 380.1 L605.7 380.3 L607.8 380.6 L610.1 380.8 L612.6 381.1 L615.3 381.5 L618.1 382.0 L621.0 382.5 L624.1 383.2 L627.3 383.9 L630.7 384.8 L634.2 385.6 L637.6 386.6 L641.0 387.5 L644.3 388.4 L647.6 389.4 L651.0 390.4 L654.3 391.5 L657.6 392.5 L661.0 393.6 L664.4 394.7 L667.8 395.8 L671.2 396.9 L674.7 398.1 L678.1 399.3 L681.5 400.7 L685.0 402.2 L688.7 404.0 L692.4 405.7 L695.9 407.5 L699.0 409.2 L701.7 410.8 L703.8 412.2 L705.5 413.4 L706.8 414.6 L707.9 415.7 L708.9 416.8 L710.0 418.0 L711.0 419.1 L711.9 420.2 L712.8 421.3 L713.5 422.4 L714.3 423.6 L715.0 425.0 L715.8 426.7 L716.6 428.8 L717.3 430.9 L718.0 433.0 L718.6 434.8 L719.0 436.0 M719.0 436.0 L719.1 436.6 L719.2 437.5 L719.3 438.6 L719.4 439.7 L719.4 440.9 L719.3 442.0 L719.2 443.1 L719.0 444.2 L718.8 445.3 L718.5 446.5 L718.0 447.7 L717.4 449.0 L716.6 450.4 L715.6 451.8 L714.5 453.3 L713.3 454.9 L712.0 456.4 L710.7 457.8 L709.3 459.2 L707.7 460.7 L706.1 462.1 L704.4 463.5 L702.7 464.7 L701.0 465.8 L699.2 466.7 L697.4 467.3 L695.5 467.9 L693.6 468.4 L691.8 468.9 L690.0 469.5 L688.2 470.1 L686.5 470.8 L684.8 471.4 L683.1 472.0 L681.5 472.7 L680.0 473.5 L678.6 474.3 L677.3 475.2 L676.1 476.1 L675.0 477.1 L673.9 478.0 L673.0 479.0 L672.2 480.0 L671.5 481.2 L670.9 482.3 L670.3 483.4 L669.9 484.3 L669.6 485.0 M669.6 485.0 L669.6 485.6 L669.6 486.4 L669.7 487.4 L669.7 488.5 L669.8 489.5 L670.0 490.5 L670.2 491.4 L670.5 492.3 L670.8 493.1 L671.1 494.0 L671.5 494.8 L672.0 495.5 L672.5 496.2 L673.1 496.8 L673.8 497.4 L674.5 497.9 L675.2 498.5 L676.0 499.0 L676.7 499.5 L677.4 500.0 L678.2 500.4 L679.1 500.9 L680.1 501.4 L681.5 502.0 L683.2 502.7 L685.2 503.4 L687.4 504.2 L689.8 505.0 L692.1 505.8 L694.5 506.5 L696.8 507.2 L699.2 507.8 L701.6 508.5 L704.1 509.1 L706.6 509.7 L709.3 510.3 L712.1 510.9 L715.0 511.4 L718.0 511.9 L721.1 512.4 L724.3 512.9 L727.4 513.3 L730.6 513.7 L733.8 514.0 L737.1 514.3 L740.4 514.5 L743.7 514.7 L747.0 514.8 L750.3 514.8 L753.5 514.7 L756.8 514.6 L760.1 514.4 L763.4 514.2 L766.8 514.0 L770.2 513.7 L773.8 513.4 L777.3 513.1 L780.9 512.7 L784.3 512.4 L787.6 512.0 L790.7 511.6 L793.6 511.3 L796.5 510.9 L799.3 510.6 L802.1 510.2 L805.0 509.8 L808.1 509.4 L811.5 508.9 L814.9 508.4 L818.1 508.0 L820.8 507.6 L822.7 507.3 M321.0 362.0 L322.3 370.7 L324.0 382.8 L326.2 397.2 L328.5 413.3 L331.0 430.0 L333.7 447.8 L336.6 467.2 L339.7 487.7 L342.9 508.8 L346.0 530.0 L349.3 552.1 L352.8 575.4 L356.2 598.7 L359.4 620.7 L362.0 640.0 L364.0 656.5 L365.4 671.2 L366.6 684.1 L367.5 695.5 L368.5 705.7 L369.4 714.5 L370.3 721.8 L371.0 727.8 L371.6 732.4 L372.0 736.0 M372.0 736.0 L372.2 736.8 L372.4 738.0 L372.8 739.4 L373.1 740.9 L373.5 742.5 L374.0 744.0 L374.5 745.6 L375.1 747.3 L375.7 749.1 L376.4 750.9 L377.1 752.5 L378.0 754.0 L379.0 755.2 L380.0 756.3 L381.1 757.3 L382.3 758.2 L383.6 759.1 L385.0 760.0 L386.4 760.9 L387.9 761.7 L389.4 762.5 L391.0 763.3 L392.8 764.1 L394.8 765.0 L397.0 765.9 L399.4 766.8 L401.9 767.8 L404.6 768.7 L407.3 769.7 L410.0 770.5 L412.7 771.3 L415.5 772.0 L418.3 772.7 L421.3 773.4 L424.4 774.1 L427.6 774.7 L431.1 775.3 L434.7 775.9 L438.6 776.5 L442.4 777.0 L446.3 777.5 L450.0 778.0 L453.5 778.4 L456.8 778.8 L460.1 779.2 L463.5 779.5 L467.2 779.8 L471.4 780.0 L476.2 780.2 L481.4 780.3 L487.0 780.3 L492.7 780.3 L498.4 780.2 L504.0 780.0 L509.5 779.7 L515.0 779.3 L520.5 778.8 L526.0 778.3 L531.5 777.7 L537.0 777.0 L542.7 776.2 L548.7 775.3 L554.6 774.4 L560.3 773.4 L565.5 772.5 L570.0 771.8 L573.6 771.2 L576.4 770.8 L578.8 770.4 L580.9 770.1 L582.9 769.7 L585.0 769.3 L587.4 768.8 L589.8 768.1 L592.2 767.5 L594.4 766.9 L596.2 766.4 L597.5 766.0 M597.5 766.0 L598.4 765.6 L599.8 765.0 L601.3 764.4 L603.0 763.7 L604.6 763.0 L606.0 762.5 L607.1 762.1 L607.9 761.7 L608.7 761.4 L609.6 761.1 L611.0 760.8 L613.0 760.5 L615.8 760.1 L619.3 759.7 L623.3 759.2 L627.3 758.8 L631.3 758.5 L634.8 758.3 L638.0 758.3 L641.1 758.4 L644.1 758.6 L647.0 758.8 L649.6 759.1 L652.0 759.4 L654.2 759.7 L656.2 760.1 L658.1 760.6 L659.7 761.0 L661.0 761.3 L662.0 761.6 M597.600 379.400L597.500 766 M669.6 486.0 L669.3 499.2 L669.0 518.0 L668.5 539.3 L668.0 560.0 L667.3 579.6 L666.6 599.6 L665.8 619.9 L665.0 640.0 L664.2 660.1 L663.4 680.3 L662.6 700.4 L662.0 720.0 L661.6 740.9 L661.3 762.5 L661.1 781.6 L661.0 795.0 M661.0 795.0 L661.1 795.8 L661.1 796.9 L661.2 798.2 L661.3 799.6 L661.6 800.9 L662.0 802.0 L662.6 802.9 L663.4 803.7 L664.2 804.5 L665.2 805.2 L666.1 805.8 L667.0 806.5 L667.7 807.1 L668.2 807.6 L668.7 808.1 L669.4 808.6 L670.4 809.2 L672.0 809.8 L674.1 810.6 L676.7 811.5 L679.7 812.4 L682.9 813.3 L686.2 814.2 L689.5 815.0 L692.9 815.7 L696.5 816.4 L700.2 817.0 L704.0 817.6 L707.7 818.1 L711.4 818.5 L715.0 818.9 L718.6 819.1 L722.2 819.4 L725.8 819.5 L729.4 819.6 L733.0 819.6 L736.7 819.5 L740.4 819.3 L744.2 819.0 L747.9 818.7 L751.5 818.3 L755.0 817.9 L758.4 817.5 L761.8 817.0 L765.1 816.4 L768.3 815.9 L771.2 815.3 L774.0 814.8 L776.6 814.3 L779.1 813.7 L781.4 813.2 L783.5 812.7 L785.2 812.3 L786.5 812.0 M392 325L470 293L640 325 M392 325H640 M393 325.500L597.600 379.400 M640 325L661 391 M719.700 448.200L938.800 462 M703 468.500L822.700 507.300" fill="none" stroke="#1f3c8f" stroke-width="2.400" stroke-linejoin="round"/>
<path d="M321.0 362.0 L322.3 370.7 L324.0 382.8 L326.2 397.2 L328.5 413.3 L331.0 430.0 L333.7 447.8 L336.6 467.2 L339.7 487.7 L342.9 508.8 L346.0 530.0 L349.3 552.1 L352.8 575.4 L356.2 598.7 L359.4 620.7 L362.0 640.0 L364.0 656.5 L365.4 671.2 L366.6 684.1 L367.5 695.5 L368.5 705.7 L369.4 714.5 L370.3 721.8 L371.0 727.8 L371.6 732.4 L372.0 736.0 M669.6 486.0 L669.3 499.2 L669.0 518.0 L668.5 539.3 L668.0 560.0 L667.3 579.6 L666.6 599.6 L665.8 619.9 L665.0 640.0 L664.2 660.1 L663.4 680.3 L662.6 700.4 L662.0 720.0 L661.6 740.9 L661.3 762.5 L661.1 781.6 L661.0 795.0" fill="none" stroke="#1f3c8f" stroke-width="2.800" stroke-linejoin="round"/>
<path d="M640 325L938.800 462 M938.800 462L822.700 507.300 M822.700 507.300L786.500 812 M786.500 812L917.500 786 M938.800 462L917.500 786" fill="none" stroke="#1f3c8f" stroke-width="3" stroke-linejoin="round"/>
<path d="M642 325.500L938 461.500M937 463L824 507" fill="none" stroke="#9fb0e6" stroke-width=".700"/>
<path d="M822.700 405.500L944 446" stroke="#222" stroke-width="1.300" stroke-dasharray="15 6" fill="none"/>
<circle cx="369" cy="456" r="3.800" fill="#fff" stroke="#111" stroke-width="1.200"/><path d="M369 456L369 452.2A3.800 3.800 0 0 1 372.8 456Z M369 456L369 459.8A3.800 3.800 0 0 1 365.2 456Z" fill="#111"/>
<text x="376" y="453" font-size="4.800" font-style="italic" fill="#7a7a7a" transform="rotate(-18 376 453)">Level 6</text>
<text x="377" y="461" font-size="4.800" font-style="italic" fill="#7a7a7a" transform="rotate(-18 377 461)">18.00</text>
<path d="M373 457L393 451" stroke="#8a8a8a" stroke-width=".800"/>
<circle cx="372" cy="545" r="3.800" fill="#fff" stroke="#111" stroke-width="1.200"/><path d="M372 545L372 541.2A3.800 3.800 0 0 1 375.8 545Z M372 545L372 548.8A3.800 3.800 0 0 1 368.2 545Z" fill="#111"/>
<text x="379" y="542" font-size="4.800" font-style="italic" fill="#7a7a7a" transform="rotate(-18 379 542)">Level 5</text>
<text x="380" y="550" font-size="4.800" font-style="italic" fill="#7a7a7a" transform="rotate(-18 380 550)">15.00</text>
<path d="M376 546L396 540" stroke="#8a8a8a" stroke-width=".800"/>
<circle cx="372" cy="588" r="3.800" fill="#fff" stroke="#111" stroke-width="1.200"/><path d="M372 588L372 584.2A3.800 3.800 0 0 1 375.8 588Z M372 588L372 591.8A3.800 3.800 0 0 1 368.2 588Z" fill="#111"/>
<text x="379" y="585" font-size="4.800" font-style="italic" fill="#7a7a7a" transform="rotate(-18 379 585)">Level 4</text>
<text x="380" y="593" font-size="4.800" font-style="italic" fill="#7a7a7a" transform="rotate(-18 380 593)">12.00</text>
<path d="M376 589L396 583" stroke="#8a8a8a" stroke-width=".800"/>
<circle cx="375" cy="632" r="3.800" fill="#fff" stroke="#111" stroke-width="1.200"/><path d="M375 632L375 628.2A3.800 3.800 0 0 1 378.8 632Z M375 632L375 635.8A3.800 3.800 0 0 1 371.2 632Z" fill="#111"/>
<text x="382" y="629" font-size="4.800" font-style="italic" fill="#7a7a7a" transform="rotate(-18 382 629)">Level 3</text>
<text x="383" y="637" font-size="4.800" font-style="italic" fill="#7a7a7a" transform="rotate(-18 383 637)">9.00</text>
<path d="M379 633L399 627" stroke="#8a8a8a" stroke-width=".800"/>
<circle cx="378" cy="676" r="3.800" fill="#fff" stroke="#111" stroke-width="1.200"/><path d="M378 676L378 672.2A3.800 3.800 0 0 1 381.8 676Z M378 676L378 679.8A3.800 3.800 0 0 1 374.2 676Z" fill="#111"/>
<text x="385" y="673" font-size="4.800" font-style="italic" fill="#7a7a7a" transform="rotate(-18 385 673)">Level 2</text>
<text x="386" y="681" font-size="4.800" font-style="italic" fill="#7a7a7a" transform="rotate(-18 386 681)">6.00</text>
<path d="M382 677L402 671" stroke="#8a8a8a" stroke-width=".800"/>
<circle cx="370" cy="718" r="3.800" fill="#fff" stroke="#1b3fd0" stroke-width="1.200"/><path d="M370 718L370 714.2A3.800 3.800 0 0 1 373.8 718Z M370 718L370 721.8A3.800 3.800 0 0 1 366.2 718Z" fill="#1b3fd0"/>
<text x="377" y="715" font-size="4.800" font-style="italic" fill="#7a7a7a" transform="rotate(-18 377 715)">Level 2</text>
<text x="378" y="723" font-size="4.800" font-style="italic" fill="#7a7a7a" transform="rotate(-18 378 723)">3.00</text>
<path d="M374 719L394 713" stroke="#8a8a8a" stroke-width=".800"/>
<circle cx="370" cy="763" r="3.800" fill="#fff" stroke="#1b3fd0" stroke-width="1.200"/><path d="M370 763L370 759.2A3.800 3.800 0 0 1 373.8 763Z M370 763L370 766.8A3.800 3.800 0 0 1 366.2 763Z" fill="#1b3fd0"/>
<text x="377" y="760" font-size="4.800" font-style="italic" fill="#7a7a7a" transform="rotate(-18 377 760)">Level 1</text>
<text x="378" y="768" font-size="4.800" font-style="italic" fill="#7a7a7a" transform="rotate(-18 378 768)">0.00</text>
<path d="M374 764L394 758" stroke="#8a8a8a" stroke-width=".800"/>
<path d="M481 322v17l4-3.500 3 6.500 2.500-1-3-6.500h5.500z" fill="#fff" stroke="#222" stroke-width="1.100" stroke-linejoin="round"/>
<ellipse cx="1122.500" cy="302.400" rx="61" ry="21" fill="#f3f3f3" stroke="#dcdcdc" stroke-width="1.300"/>
<ellipse cx="1122.500" cy="302.400" rx="46" ry="16" fill="#fdfdfd" stroke="#dedede" stroke-width="1.300"/>
<ellipse cx="1122" cy="303" rx="38" ry="11" fill="#ececec" opacity=".7"/>
<path d="M1091 254.100L1123 247.900L1153.400 254.700L1120.600 262Z" fill="#f4f4f4" stroke="#8c8c8c" stroke-width="1"/>
<path d="M1091 254.100L1120.600 262V307.500L1092.500 295.700Z" fill="#dcdcdc" stroke="#8c8c8c" stroke-width="1"/>
<path d="M1120.600 262L1153.400 254.700L1152.800 296.200L1120.600 307.500Z" fill="#e6e6e6" stroke="#8c8c8c" stroke-width="1"/>
<text x="0" y="4" font-size="11" font-weight="bold" fill="#9a9a9a" text-anchor="middle" textLength="13.500" lengthAdjust="spacingAndGlyphs" transform="matrix(1 .27 0 1 1105.500 280.500)">LEFT</text>
<text x="0" y="4" font-size="11.500" font-weight="bold" fill="#9a9a9a" text-anchor="middle" textLength="23" lengthAdjust="spacingAndGlyphs" transform="matrix(1 -.22 0 1 1137.300 280.500)">FRONT</text>
<rect x="1170.500" y="350.500" width="33" height="115" rx="4" fill="#f3f3f3" stroke="#bdbdbd" stroke-width="1.300"/>
<circle cx="1197" cy="357" r="3" fill="#e0e0e0" stroke="#aaa" stroke-width="1"/><path d="M1195.500 355.500l3 3M1198.500 355.500l-3 3" stroke="#999" stroke-width=".800"/>
<circle cx="1186" cy="380" r="8.500" fill="#f6f6f6" stroke="#a5a5a5" stroke-width="1.800"/><circle cx="1186" cy="380" r="4.500" fill="#fafafa" stroke="#a5a5a5" stroke-width="1.300"/>
<path d="M1190 384l4.500-2 4.500 2v6l-4.500 2.500-4.500-2.500z" fill="#8db8ec" stroke="#5d8fd0" stroke-width="1"/><path d="M1190 384l4.500 2.300 4.500-2.300" fill="none" stroke="#dbe9fa" stroke-width="1"/>
<path d="M1184 400.500h6l-3 3z" fill="#888"/>
<path d="M1174 408.500h26" stroke="#cfcfcf" stroke-width="1"/>
<rect x="1180" y="416" width="11" height="11" fill="#b8d1a8" stroke="#9ab58a" stroke-width="1"/><circle cx="1192" cy="427" r="3.200" fill="#f4f4f4" stroke="#888" stroke-width="1.200"/><path d="M1194.500 429.500l3 3" stroke="#888" stroke-width="1.500"/>
<path d="M1184 441.500h6l-3 3z" fill="#888"/>
<circle cx="1197" cy="458.500" r="3" fill="#e0e0e0" stroke="#aaa" stroke-width="1"/><path d="M1195 458.500h4" stroke="#999" stroke-width="1"/>
</svg>
</div>
<svg style="left:1460px;top:765px;z-index:5" width="110" height="105" viewBox="1460 765 110 105"><path d="M1511.200 774.500L1532.300 785.200L1511.200 796.500L1491 785.200Z M1491 785.200V788.900L1511.200 799.800L1532.300 788.900V785.200M1511.200 796.500V799.800 M1491 786.300L1470.800 795.600L1511.200 815L1553.400 794.800L1532.300 786.300 M1470.800 795.600V813.300M1553.400 794.800V812.500M1511.200 815V863.900 M1470.800 819.200L1491.800 828.500V852.900L1470.800 842.800Z M1470.800 819.200L1475.800 816.700L1496.900 826.800L1491.800 828.500M1496.900 826.800V856.300M1491.800 852.900L1496.900 850.400 M1470.800 813.300L1475.800 816.700 M1533.100 828.500L1553.400 819.200V842.800L1533.100 852.900Z M1533.100 828.500L1527.200 826L1548.300 816.700L1553.400 819.200M1527.200 826V856.300M1533.100 852.900L1527.200 850.400 M1553.400 812.500L1548.300 816.700 M1496.900 856.300L1511.200 863.900L1527.200 856.300" fill="none" stroke="#3fa98f" stroke-width="1.700" stroke-linejoin="round"/></svg>
<!-- ===== PROJECT BROWSER ===== -->
<div id="browser">
<div style="left:0;top:0;width:356px;height:21px;background:#f0f0f0"></div>
<div style="left:0;top:0;width:355px;height:1px;background:#d6d6d6"></div>
<span class="t" style="left:4px;top:5px;color:#333;letter-spacing:-.36px">Project Browser - MASA CONCEPTUAL 01.rvt</span>
<svg style="left:341px;top:6px" width="12" height="12" viewBox="0 0 12 12"><path d="M1.500 1.500l9 9M10.500 1.500l-9 9" stroke="#222" stroke-width="1.700"/></svg>
<svg style="left:0;top:0" width="355" height="400" viewBox="0 0 355 400"><path d="M10.5 35.6L10.5 368.6" stroke="#b4b4b4" stroke-width="1" stroke-dasharray="1 1" fill="none"/><path d="M15.5 30.6L21.5 30.6" stroke="#b4b4b4" stroke-width="1" stroke-dasharray="1 1" fill="none"/><path d="M30.5 38.6L30.5 186.7" stroke="#b4b4b4" stroke-width="1" stroke-dasharray="1 1" fill="none"/><path d="M35.5 49.4L45.5 49.4" stroke="#b4b4b4" stroke-width="1" stroke-dasharray="1 1" fill="none"/><path d="M35.5 120.5L45.5 120.5" stroke="#b4b4b4" stroke-width="1" stroke-dasharray="1 1" fill="none"/><path d="M35.5 173.9L45.5 173.9" stroke="#b4b4b4" stroke-width="1" stroke-dasharray="1 1" fill="none"/><path d="M35.5 191.7L45.5 191.7" stroke="#b4b4b4" stroke-width="1" stroke-dasharray="1 1" fill="none"/><path d="M49.5 66.7L63.5 66.7" stroke="#b4b4b4" stroke-width="1" stroke-dasharray="1 1" fill="none"/><path d="M49.5 84.5L63.5 84.5" stroke="#b4b4b4" stroke-width="1" stroke-dasharray="1 1" fill="none"/><path d="M49.5 102.3L63.5 102.3" stroke="#b4b4b4" stroke-width="1" stroke-dasharray="1 1" fill="none"/><path d="M49.5 137.8L63.5 137.8" stroke="#b4b4b4" stroke-width="1" stroke-dasharray="1 1" fill="none"/><path d="M49.5 155.6L63.5 155.6" stroke="#b4b4b4" stroke-width="1" stroke-dasharray="1 1" fill="none"/><path d="M49.5 209.0L63.5 209.0" stroke="#b4b4b4" stroke-width="1" stroke-dasharray="1 1" fill="none"/><path d="M49.5 226.8L63.5 226.8" stroke="#b4b4b4" stroke-width="1" stroke-dasharray="1 1" fill="none"/><path d="M49.5 244.6L63.5 244.6" stroke="#b4b4b4" stroke-width="1" stroke-dasharray="1 1" fill="none"/><path d="M49.5 262.4L63.5 262.4" stroke="#b4b4b4" stroke-width="1" stroke-dasharray="1 1" fill="none"/><path d="M49.5 57.4L49.5 101.8" stroke="#b4b4b4" stroke-width="1" stroke-dasharray="1 1" fill="none"/><path d="M49.5 128.5L49.5 155.1" stroke="#b4b4b4" stroke-width="1" stroke-dasharray="1 1" fill="none"/><path d="M49.5 199.7L49.5 261.9" stroke="#b4b4b4" stroke-width="1" stroke-dasharray="1 1" fill="none"/><path d="M10.5 279.7L21.5 279.7" stroke="#b4b4b4" stroke-width="1" stroke-dasharray="1 1" fill="none"/><path d="M10.5 297.4L21.5 297.4" stroke="#b4b4b4" stroke-width="1" stroke-dasharray="1 1" fill="none"/><path d="M10.5 315.2L21.5 315.2" stroke="#b4b4b4" stroke-width="1" stroke-dasharray="1 1" fill="none"/><path d="M10.5 368.6L21.5 368.6" stroke="#b4b4b4" stroke-width="1" stroke-dasharray="1 1" fill="none"/><path d="M15.5 333.0L20.5 333.0" stroke="#b4b4b4" stroke-width="1" stroke-dasharray="1 1" fill="none"/><path d="M15.5 350.8L20.5 350.8" stroke="#b4b4b4" stroke-width="1" stroke-dasharray="1 1" fill="none"/></svg>
<svg style="left:6.0px;top:26.1px" width="9" height="9" viewBox="0 0 9 9"><rect x=".500" y=".500" width="8" height="8" fill="#fff" stroke="#9a9a9a" stroke-width="1"/><path d="M2.500 4.500h4" stroke="#444" stroke-width="1"/></svg>
<svg style="left:22.0px;top:23.1px" width="16" height="15" viewBox="0 0 16 15"><path d="M1.500 4.500v-3h3M10.500 1.500h3v3M13.500 10.500v3h-3M4.500 13.500h-3v-3" fill="none" stroke="#333" stroke-width="1.400"/><rect x="4.500" y="4.500" width="6" height="6" rx="1.500" fill="#f4f4f4" stroke="#333" stroke-width="1.200"/></svg>
<span class="tr" style="left:44.0px;top:23.1px">Views (all)</span>
<svg style="left:26.0px;top:44.9px" width="9" height="9" viewBox="0 0 9 9"><rect x=".500" y=".500" width="8" height="8" fill="#fff" stroke="#9a9a9a" stroke-width="1"/><path d="M2.500 4.500h4" stroke="#444" stroke-width="1"/></svg>
<span class="tr" style="left:47.5px;top:40.9px">Floor Plans</span>
<div style="left:64px;top:57.7px;width:43px;height:17px;background:#e4e4e4"></div>
<span class="tr" style="left:67.5px;top:58.7px">Level 1</span>
<span class="tr" style="left:67.5px;top:76.5px">Level 2</span>
<span class="tr" style="left:67.5px;top:94.3px">Site</span>
<svg style="left:26.0px;top:116.0px" width="9" height="9" viewBox="0 0 9 9"><rect x=".500" y=".500" width="8" height="8" fill="#fff" stroke="#9a9a9a" stroke-width="1"/><path d="M2.500 4.500h4" stroke="#444" stroke-width="1"/></svg>
<span class="tr" style="left:47.5px;top:112.0px">Ceiling Plans</span>
<span class="tr" style="left:67.5px;top:129.8px">Level 1</span>
<span class="tr" style="left:67.5px;top:147.6px">Level 2</span>
<svg style="left:26.0px;top:169.4px" width="9" height="9" viewBox="0 0 9 9"><rect x=".500" y=".500" width="8" height="8" fill="#fff" stroke="#9a9a9a" stroke-width="1"/><path d="M2.500 4.500h4M4.500 2.500v4" stroke="#444" stroke-width="1"/></svg>
<span class="tr" style="left:47.5px;top:165.4px">3D Views</span>
<svg style="left:26.0px;top:187.2px" width="9" height="9" viewBox="0 0 9 9"><rect x=".500" y=".500" width="8" height="8" fill="#fff" stroke="#9a9a9a" stroke-width="1"/><path d="M2.500 4.500h4" stroke="#444" stroke-width="1"/></svg>
<span class="tr" style="left:47.5px;top:183.2px">Elevations (Building Elevation)</span>
<span class="tr" style="left:67.5px;top:201.0px">East</span>
<span class="tr" style="left:67.5px;top:218.8px">North</span>
<span class="tr" style="left:67.5px;top:236.6px">South</span>
<span class="tr" style="left:67.5px;top:254.4px">West</span>
<svg style="left:22.0px;top:272.2px" width="16" height="15" viewBox="0 0 16 15"><rect x="1.500" y="1.500" width="13" height="12" fill="#f4f4f4" stroke="#444" stroke-width="1.200"/><path d="M1.500 4.500h13" stroke="#444" stroke-width="1.500"/><path d="M3.500 7.500h3M3.500 10.500h3" stroke="#444" stroke-width="1.800"/><path d="M8 7.500h5M8 10.500h5" stroke="#666" stroke-width="1"/></svg>
<span class="tr" style="left:44.0px;top:272.2px">Legends</span>
<svg style="left:22.0px;top:289.9px" width="16" height="15" viewBox="0 0 16 15"><rect x="1.500" y="2.500" width="13" height="11" fill="#f4f4f4" stroke="#444" stroke-width="1.200"/><path d="M1.500 5h13" stroke="#444" stroke-width="2"/><path d="M1.500 8h13M1.500 10.800h13M6 5v8.500M10.500 5v8.500" stroke="#555" stroke-width=".9"/></svg>
<span class="tr" style="left:44.0px;top:289.9px">Schedules/Quantities (all)</span>
<svg style="left:22.0px;top:307.7px" width="16" height="15" viewBox="0 0 16 15"><rect x="1.500" y="2.500" width="13" height="11" fill="#f4f4f4" stroke="#444" stroke-width="1.200"/><rect x="3.500" y="5.500" width="5" height="5" fill="none" stroke="#555" stroke-width="1"/><path d="M10 11.500h3M5 8h2" stroke="#555" stroke-width="1"/><path d="M10.500 4.500v5" stroke="#777" stroke-width="1"/></svg>
<span class="tr" style="left:44.0px;top:307.7px">Sheets (all)</span>
<svg style="left:6.0px;top:328.5px" width="9" height="9" viewBox="0 0 9 9"><rect x=".500" y=".500" width="8" height="8" fill="#fff" stroke="#9a9a9a" stroke-width="1"/><path d="M2.500 4.500h4M4.500 2.500v4" stroke="#444" stroke-width="1"/></svg>
<svg style="left:22.0px;top:325.5px" width="16" height="15" viewBox="0 0 16 15"><path d="M2.500 1.500h6v6h-6zM10.500 1.500h3v12h-11v-3h8z" fill="#f4f4f4" stroke="#444" stroke-width="1.200"/></svg>
<span class="tr" style="left:44.0px;top:325.5px">Families</span>
<svg style="left:6.0px;top:346.3px" width="9" height="9" viewBox="0 0 9 9"><rect x=".500" y=".500" width="8" height="8" fill="#fff" stroke="#9a9a9a" stroke-width="1"/><path d="M2.500 4.500h4M4.500 2.500v4" stroke="#444" stroke-width="1"/></svg>
<svg style="left:22.0px;top:343.3px" width="16" height="15" viewBox="0 0 16 15"><path d="M4.500 1.500h-3v12h3M10.500 1.500h3v12h-3" fill="none" stroke="#333" stroke-width="1.300"/><circle cx="6.500" cy="6.500" r="3" fill="#f4f4f4" stroke="#444" stroke-width="1.100"/><rect x="6" y="6.500" width="5" height="5" fill="#e6e6e6" stroke="#444" stroke-width="1.100"/></svg>
<span class="tr" style="left:44.0px;top:343.3px">Groups</span>
<svg style="left:22.0px;top:361.1px" width="16" height="15" viewBox="0 0 16 15"><rect x="1" y="5" width="7.500" height="5.500" rx="2.700" fill="none" stroke="#c8940a" stroke-width="2"/><rect x="7" y="5" width="7.500" height="5.500" rx="2.700" fill="none" stroke="#e0a818" stroke-width="2"/></svg>
<span class="tr" style="left:44.0px;top:361.1px">Revit Links</span>
</div>
<!-- ===== VERTICAL SCROLL + VIEW CONTROL BAR ===== -->
<div id="vscroll">
 <svg style="left:3px;top:6px" width="11" height="8" viewBox="0 0 11 8"><path d="M1.500 6l4-4 4 4" fill="none" stroke="#333" stroke-width="1.500"/></svg>
 <div style="left:1px;top:322px;width:16px;height:16px;background:#cdcdcd"></div>
 <svg style="left:3px;top:643px" width="11" height="8" viewBox="0 0 11 8"><path d="M1.500 2l4 4 4-4" fill="none" stroke="#333" stroke-width="1.500"/></svg>
</div>
<div id="viewctl">
 <span class="t" style="left:26px;top:2.500px;font-size:11.500px;color:#222">1 : 100</span>
 <svg style="left:71px;top:0" width="320" height="20" viewBox="353 846.500 320 20">
  <!-- detail level -->
  <rect x="362.500" y="849.500" width="14" height="11" fill="#f8f8f8" stroke="#333" stroke-width="1.300"/><path d="M362.500 853.500h14M367 849.500v4M372 849.500v4" stroke="#333" stroke-width="1.200"/><rect x="365" y="855.500" width="9" height="3" fill="#555"/>
  <!-- visual style -->
  <path d="M383.500 853.500l4-3.500h10v8l-4 3.500h-10zM383.500 853.500h10v8M393.500 853.500l4-3.500" fill="#f8f8f8" stroke="#333" stroke-width="1.200" stroke-linejoin="round"/>
  <!-- sun path off -->
  <g transform="translate(410,855)"><path d="M0-6.500L1.500-3.600 4.600-4.600 3.600-1.500 6.500 0 3.600 1.500 4.600 4.600 1.500 3.600 0 6.500-1.500 3.600-4.600 4.600-3.600 1.500-6.500 0-3.600-1.500-4.600-4.600-1.500-3.600Z" fill="#f0a020"/><circle r="2.500" fill="#ffe680"/><path d="M2 2l5 5M7 2l-5 5" stroke="#d22" stroke-width="1.700"/></g>
  <!-- shadows off -->
  <circle cx="430" cy="853.500" r="4" fill="#dfe8f7" stroke="#3a62b0" stroke-width="1.300"/><path d="M425 860.500h8" stroke="#3a62b0" stroke-width="1.500"/><path d="M432 856l6 6M438 856l-6 6" stroke="#d22" stroke-width="1.700"/>
  <!-- crop view -->
  <path d="M444 852.500l4-2.500 8 1.500v5l-4 2.500-8-1.500z" fill="#eef2fa" stroke="#444" stroke-width="1.100"/><circle cx="456" cy="858" r="3" fill="#fff" stroke="#3a62b0" stroke-width="1.100"/><path d="M456 861v2" stroke="#3a62b0" stroke-width="1.200"/>
  <!-- show crop -->
  <path d="M466 852.500h10M466 858.500h10M468.500 850v11M473.500 850v11" stroke="#3a62b0" stroke-width="1.400"/><path d="M471 853l7 7M478 853l-7 7" stroke="#d22" stroke-width="1.800"/>
  <!-- crop region -->
  <path d="M486 852.500h10M486 858.500h10M488.500 850v11M493.500 850v11" stroke="#3a62b0" stroke-width="1.400"/><circle cx="498" cy="857" r="3" fill="#fff" stroke="#3a62b0" stroke-width="1.100"/><path d="M498 860v2.500" stroke="#3a62b0" stroke-width="1.200"/>
  <!-- lock 3d -->
  <path d="M507 856l7-6.500 7 6.500v6h-14z" fill="#f4f4f4" stroke="#333" stroke-width="1.300" stroke-linejoin="round"/><rect x="515" y="857" width="6" height="5" fill="#666"/><path d="M516 857v-1.500a2 2 0 0 1 4 0v1.500" fill="none" stroke="#444" stroke-width="1"/>
  <!-- temp hide -->
  <path d="M526 856c2-3 4-3 5.500 0s3.500 3 5.500 0" fill="none" stroke="#333" stroke-width="1.300"/><circle cx="529" cy="857.500" r="2.500" fill="none" stroke="#333" stroke-width="1.100"/><circle cx="536" cy="857.500" r="2.500" fill="none" stroke="#333" stroke-width="1.100"/>
  <!-- reveal -->
  <circle cx="556" cy="854.500" r="3" fill="#eaf1fc" stroke="#3a62b0" stroke-width="1.200"/><path d="M556 857.500v3" stroke="#3a62b0" stroke-width="1.300"/>
  <!-- temp view props -->
  <rect x="569.500" y="851.500" width="11" height="8" fill="none" stroke="#222" stroke-width="1.300" stroke-dasharray="2 1"/><circle cx="580" cy="858.500" r="2.800" fill="#f4f4f4" stroke="#333" stroke-width="1"/>
  <!-- analytical -->
  <path d="M590 861v-6l5-4.500 5 4.500v6M593 861v-5M597 861v-5" fill="none" stroke="#444" stroke-width="1.200"/><path d="M589 855h12" stroke="#b33" stroke-width="1.300"/><circle cx="601" cy="858" r="2.500" fill="#fff" stroke="#3a62b0" stroke-width="1"/>
  <!-- highlight displacement -->
  <path d="M611 854l3-2.500h8v6.500l-3 2.500h-8zM611 854h8v6.500M619 854l3-2.500" fill="#e4e4e4" stroke="#333" stroke-width="1.100" stroke-linejoin="round"/><path d="M614 856.500h8v5h-8z" fill="#cfcfcf" stroke="#333" stroke-width="1"/>
  <!-- constraints -->
  <path d="M631 850v12M631 852.500h14M645 850v5" stroke="#333" stroke-width="1.300"/><rect x="639" y="856.500" width="6.500" height="5" fill="#666"/><path d="M640.500 856.500v-1.500a1.800 1.800 0 0 1 3.600 0v1.500" fill="none" stroke="#444" stroke-width="1"/>
  <!-- h-scroll left arrow -->
  <path d="M661 851.500l-4 4 4 4" fill="none" stroke="#333" stroke-width="1.600"/>
 </svg>
 <div style="left:637px;top:2px;width:17px;height:16px;background:#cdcdcd"></div>
 <svg style="left:910px;top:4px" width="10" height="12" viewBox="0 0 10 12"><path d="M2 2l4 4-4 4" fill="none" stroke="#333" stroke-width="1.600"/></svg>
 <svg style="left:927px;top:6px" width="12" height="12" viewBox="0 0 12 12"><path d="M9 3v1M9 6v1M6 6v1M9 9v1M6 9v1M3 9v1" stroke="#a0a0a0" stroke-width="1.500"/></svg>
</div>
<!-- ===== STATUS BAR ===== -->
<div id="status">
 <div style="left:0;top:0;width:1582px;height:1px;background:#d8d8d8"></div>
 <span class="t" style="left:3px;top:6px;color:#222;letter-spacing:-.54px">Mass : MASA CONCEPTUAL 02 : MASA CONCEPTUAL 02</span>
 <svg style="left:570px;top:2px" width="560" height="22" viewBox="570 868 560 22">
  <!-- worksets icon (disabled) -->
  <path d="M580 886v-7l2-3h3l1 3v7zM588 886v-9l2-4h3l2 4v9z" fill="#b9b9b9" stroke="#9a9a9a" stroke-width="1"/><circle cx="583" cy="873.500" r="2" fill="#aaa"/><circle cx="591.500" cy="871.500" r="2" fill="#aaa"/>
  <rect x="602.500" y="871.500" width="201" height="16" fill="#fff" stroke="#d0d0d0" stroke-width="1"/>
  <path d="M792 877.500l4 4 4-4" fill="none" stroke="#b0b0b0" stroke-width="1.200"/>
  <!-- editing requests -->
  <path d="M815 886l5-9M817 873h9l-2 5h-6z" fill="#b5b5b5" stroke="#9c9c9c" stroke-width="1.200"/>
  <!-- design options icons -->
  <rect x="864.500" y="871.500" width="16" height="15" fill="#f6f6f6" stroke="#333" stroke-width="1.300"/><path d="M864.500 875.500h16" stroke="#333" stroke-width="1.300"/><path d="M867.500 879.500h2M867.500 883h2" stroke="#333" stroke-width="1.800"/><path d="M871.500 879.500h6M871.500 883h6" stroke="#555" stroke-width="1"/>
  <rect x="889.500" y="871.500" width="15" height="15" fill="#b4b4b4" stroke="#a2a2a2"/><path d="M892 882l4-5 3 3 3-5" fill="none" stroke="#d0d0d0" stroke-width="1.300"/>
  <rect x="915.500" y="871.500" width="200" height="16" fill="#fff" stroke="#d0d0d0" stroke-width="1"/>
  <path d="M1103 877.500l4 4 4-4" fill="none" stroke="#b0b0b0" stroke-width="1.200"/>
 </svg>
 <span class="t" style="left:832px;top:6px;color:#333">:0</span>
 <span class="t" style="left:918px;top:6px;color:#8a8a8a">Main Model</span>
 <svg style="left:1336px;top:2px" width="200" height="22" viewBox="1336 868 200 22">
  <!-- select links -->
  <rect x="1341" y="872" width="7" height="5" rx="2.500" fill="none" stroke="#c8940a" stroke-width="1.800"/><rect x="1346" y="872" width="7" height="5" rx="2.500" fill="none" stroke="#e0a818" stroke-width="1.800"/><path d="M1348 876v9l2.500-2 1.500 3.500 1.500-.7-1.500-3.300h3z" fill="#fff" stroke="#333" stroke-width=".9"/>
  <!-- select underlay -->
  <path d="M1366 884l4-9h8l-4 9zM1367 880h9" fill="none" stroke="#3a62b0" stroke-width="1.300"/><path d="M1376 870l5 5M1381 870l-5 5" stroke="#d22" stroke-width="1.700"/><path d="M1376 878v8l2-1.500 1.300 3 1.300-.6-1.300-2.900h2.500z" fill="#fff" stroke="#333" stroke-width=".8"/>
  <!-- select pinned -->
  <path d="M1394 872h10M1396 872v5h6v-5M1393 877h12M1399 877v6" stroke="#d8731c" stroke-width="1.700" fill="none"/><path d="M1402 877v9l2.500-2 1.500 3.500 1.500-.7-1.500-3.300h3z" fill="#fff" stroke="#333" stroke-width=".9"/>
  <!-- select by face -->
  <path d="M1419 873l6-2v13l-6 2z" fill="#bcd4f2" stroke="#3a62b0" stroke-width="1.200"/><path d="M1428 870l5 5M1433 870l-5 5" stroke="#d22" stroke-width="1.700"/><path d="M1427 877v9l2.500-2 1.500 3.500 1.500-.7-1.500-3.300h3z" fill="#fff" stroke="#333" stroke-width=".9"/>
  <!-- drag on select -->
  <path d="M1444 876h8M1448 872v8M1444 876l1.500-1.500M1444 876l1.500 1.500M1452 876l-1.500-1.500M1452 876l-1.500 1.500M1448 872l-1.500 1.500M1448 872l1.500 1.500M1448 880l-1.500-1.500M1448 880l1.500-1.500" stroke="#222" stroke-width="1.200"/><path d="M1452 876v10l2.500-2 1.500 3.500 1.500-.7-1.500-3.300h3z" fill="#fff" stroke="#333" stroke-width=".9"/>
  <!-- bg processes -->
  <circle cx="1477" cy="879" r="5" fill="none" stroke="#b4b4b4" stroke-width="2.500" stroke-dasharray="2.500 1.400"/>
  <!-- filter -->
  <path d="M1492 872h14l-5.500 7v6.500h-3V879z" fill="#e8e8e8" stroke="#333" stroke-width="1.300" stroke-linejoin="round"/>
 </svg>
 <span class="t" style="left:1508px;top:6px;color:#333">:0</span>
</div>
</body>
</html>
